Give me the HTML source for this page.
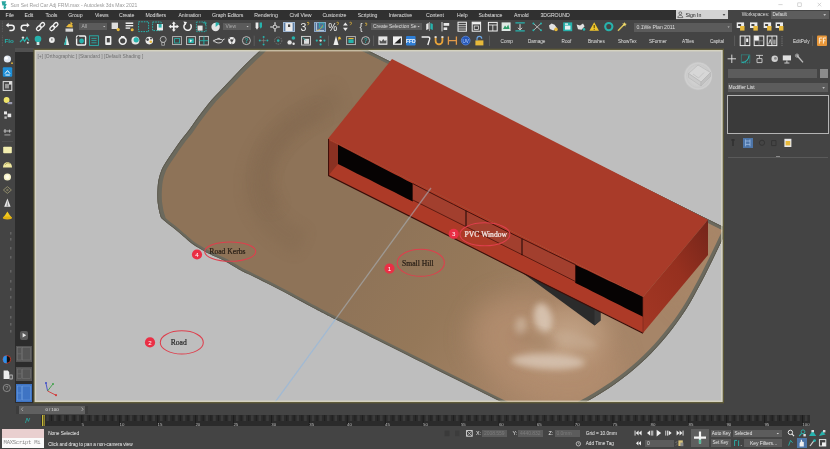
<!DOCTYPE html>
<html lang="en"><head><meta charset="utf-8"><title>Autodesk 3ds Max 2021</title>
<style>
html,body{margin:0;padding:0;}
body{width:830px;height:449px;overflow:hidden;background:#444444;position:relative;font-family:"Liberation Sans",sans-serif;}
#r{position:absolute;left:0;top:0;width:830px;height:449px;overflow:hidden;filter:blur(0.4px);}
#r>div{position:absolute;}
.t,.tm{position:absolute;white-space:nowrap;line-height:1.2;letter-spacing:-0.05px;}
.tm{font-family:"Liberation Mono",monospace;letter-spacing:-0.3px;}
svg.vp,svg.ov{position:absolute;left:0;top:0;}
.an{font-family:"Liberation Serif",serif;font-size:7.6px;stroke-width:0.22px;}
.nn{font-family:"Liberation Sans",sans-serif;font-size:6.2px;fill:#ffffff;}
.vl{font-family:"Liberation Sans",sans-serif;font-size:4.95px;fill:#707070;}
</style></head>
<body><div id="r">
<div style="left:0.0px;top:0.0px;width:830.0px;height:10.2px;background:#ffffff;"></div>
<div style="left:0.0px;top:10.2px;width:676.0px;height:9.8px;background:#303030;"></div>
<div style="left:676.0px;top:10.2px;width:154.0px;height:9.8px;background:#444444;"></div>
<div style="left:676.0px;top:10.2px;width:52.0px;height:9.3px;background:#d3d3d3;"></div>
<div style="left:771.0px;top:11.0px;width:57.6px;height:8.2px;background:#5d5d5d;"></div>
<div style="left:79.2px;top:22.6px;width:28.3px;height:7.6px;background:#5b5b5b;"></div>
<div style="left:223.3px;top:22.6px;width:27.6px;height:7.6px;background:#5b5b5b;"></div>
<div style="left:371.0px;top:22.6px;width:51.0px;height:7.6px;background:#5b5b5b;"></div>
<div style="left:633.9px;top:22.6px;width:98.5px;height:9.2px;background:#5b5b5b;"></div>
<div style="left:283.2px;top:21.6px;width:11.8px;height:10.8px;background:#5d7fa6;border:0.6px solid #9fb7d2;box-sizing:border-box;"></div>
<div style="left:314.0px;top:21.6px;width:12.0px;height:10.8px;background:#4f7096;border:0.6px solid #8aa6c6;box-sizing:border-box;"></div>
<div style="left:0.0px;top:48.0px;width:15.0px;height:355.0px;background:#444444;"></div>
<div style="left:15.0px;top:48.0px;width:18.5px;height:355.0px;background:#2c2c2c;"></div>
<div style="left:15.0px;top:48.0px;width:18.5px;height:3.5px;background:#505050;"></div>
<div style="left:723.0px;top:48.0px;width:107.0px;height:378.0px;background:#444444;"></div>
<div style="left:727.5px;top:69.0px;width:89.8px;height:9.2px;background:#5c5c5c;"></div>
<div style="left:819.6px;top:69.0px;width:8.4px;height:9.2px;background:#8c8c8c;"></div>
<div style="left:727.5px;top:83.4px;width:100.5px;height:8.8px;background:#5c5c5c;"></div>
<div style="left:727.0px;top:95.0px;width:101.5px;height:39.0px;background:#3a3a3a;border:0.9px solid #b4b4b4;box-sizing:border-box;"></div>
<div style="left:742.6px;top:137.5px;width:10.4px;height:10.6px;background:#4d75a8;"></div>
<div style="left:727.5px;top:156.6px;width:100.5px;height:0.8px;background:#5a5a5a;"></div>
<div style="left:775.5px;top:155.6px;width:4.0px;height:1.2px;background:#8a8a8a;"></div>
<div style="left:0.0px;top:403.0px;width:830.0px;height:46.0px;background:#444444;"></div>
<div style="left:16.0px;top:405.6px;width:72.0px;height:8.2px;background:#3c3c3c;"></div>
<div style="left:19.3px;top:405.8px;width:65.5px;height:7.8px;background:#606060;"></div>
<div style="left:41.4px;top:415.0px;width:768.6px;height:11.4px;background:#2b2b2b;"></div>
<div style="left:42.4px;top:415.3px;width:3.0px;height:10.8px;background:#c9b93a;"></div>
<div style="left:2.0px;top:428.5px;width:42.3px;height:9.2px;background:#e9cfcf;"></div>
<div style="left:2.0px;top:438.0px;width:42.3px;height:10.0px;background:#fbfbfb;"></div>
<div style="left:482.0px;top:429.6px;width:25.0px;height:7.6px;background:#5c5c5c;"></div>
<div style="left:518.0px;top:429.6px;width:25.0px;height:7.6px;background:#5c5c5c;"></div>
<div style="left:554.5px;top:429.6px;width:25.0px;height:7.6px;background:#5c5c5c;"></div>
<div style="left:645.0px;top:439.6px;width:29.0px;height:7.0px;background:#5c5c5c;"></div>
<div style="left:690.8px;top:428.6px;width:18.4px;height:18.4px;background:#5e5e5e;"></div>
<div style="left:710.6px;top:429.7px;width:20.8px;height:7.2px;background:#5c5c5c;"></div>
<div style="left:732.6px;top:429.7px;width:49.6px;height:7.2px;background:#5c5c5c;"></div>
<div style="left:710.6px;top:439.2px;width:20.8px;height:7.4px;background:#5c5c5c;"></div>
<div style="left:744.0px;top:439.2px;width:38.2px;height:7.4px;background:#5c5c5c;"></div>
<div style="left:797.0px;top:438.0px;width:10.0px;height:10.0px;background:#4d75a8;"></div>
<div style="left:16.2px;top:345.5px;width:15.6px;height:16.5px;background:#555555;"></div>
<div style="left:16.2px;top:367.0px;width:15.6px;height:13.5px;background:#555555;"></div>
<div style="left:16.2px;top:384.0px;width:15.6px;height:18.0px;background:#3e74c4;"></div>
<div style="left:19.5px;top:330.5px;width:8.5px;height:9.5px;background:#5a5a5a;border-radius:2px;"></div>
<span class="t" style="left:10.4px;top:2.1px;font-size:5.10px;color:#9a9a9a;">Sun Set Red Car Adj FRM.max - Autodesk 3ds Max 2021</span>
<span class="t" style="left:5.6px;top:11.9px;font-size:5.20px;color:#e2e2e2;">File</span>
<span class="t" style="left:24.5px;top:11.9px;font-size:5.20px;color:#e2e2e2;">Edit</span>
<span class="t" style="left:45.5px;top:11.9px;font-size:5.20px;color:#e2e2e2;">Tools</span>
<span class="t" style="left:68.3px;top:11.9px;font-size:5.20px;color:#e2e2e2;">Group</span>
<span class="t" style="left:95.0px;top:11.9px;font-size:5.20px;color:#e2e2e2;">Views</span>
<span class="t" style="left:119.0px;top:11.9px;font-size:5.20px;color:#e2e2e2;">Create</span>
<span class="t" style="left:145.5px;top:11.9px;font-size:5.20px;color:#e2e2e2;">Modifiers</span>
<span class="t" style="left:178.4px;top:11.9px;font-size:5.20px;color:#e2e2e2;">Animation</span>
<span class="t" style="left:212.0px;top:11.9px;font-size:5.20px;color:#e2e2e2;">Graph Editors</span>
<span class="t" style="left:254.3px;top:11.9px;font-size:5.20px;color:#e2e2e2;">Rendering</span>
<span class="t" style="left:289.6px;top:11.9px;font-size:5.20px;color:#e2e2e2;">Civil View</span>
<span class="t" style="left:322.4px;top:11.9px;font-size:5.20px;color:#e2e2e2;">Customize</span>
<span class="t" style="left:357.7px;top:11.9px;font-size:5.20px;color:#e2e2e2;">Scripting</span>
<span class="t" style="left:388.7px;top:11.9px;font-size:5.20px;color:#e2e2e2;">Interactive</span>
<span class="t" style="left:426.0px;top:11.9px;font-size:5.20px;color:#e2e2e2;">Content</span>
<span class="t" style="left:457.0px;top:11.9px;font-size:5.20px;color:#e2e2e2;">Help</span>
<span class="t" style="left:478.4px;top:11.9px;font-size:5.20px;color:#e2e2e2;">Substance</span>
<span class="t" style="left:514.0px;top:11.9px;font-size:5.20px;color:#e2e2e2;">Arnold</span>
<span class="t" style="left:540.4px;top:11.9px;font-size:5.20px;color:#e2e2e2;">3DGROUND</span>
<span class="t" style="left:685.5px;top:11.8px;font-size:5.20px;color:#222;">Sign In</span>
<span class="t" style="left:741.7px;top:12.1px;font-size:4.85px;color:#dcdcdc;">Workspaces:</span>
<span class="t" style="left:772.5px;top:12.2px;font-size:4.60px;color:#e6e6e6;">Default</span>
<span class="t" style="left:81.5px;top:23.4px;font-size:5.00px;color:#b4b4b4;">All</span>
<span class="t" style="left:225.5px;top:23.4px;font-size:5.00px;color:#a8a8a8;">View</span>
<span class="t" style="left:373.0px;top:23.4px;font-size:5.00px;color:#dddddd;">Create Selection Se</span>
<span class="t" style="left:636.5px;top:24.1px;font-size:5.20px;color:#dddddd;">0.1We Plan 2011</span>
<span class="t" style="left:500.6px;top:38.6px;font-size:4.65px;color:#e2e2e2;">Comp</span>
<span class="t" style="left:528.0px;top:38.6px;font-size:4.65px;color:#e2e2e2;">Damage</span>
<span class="t" style="left:561.6px;top:38.6px;font-size:4.65px;color:#e2e2e2;">Roof</span>
<span class="t" style="left:588.0px;top:38.6px;font-size:4.65px;color:#e2e2e2;">Brushes</span>
<span class="t" style="left:618.0px;top:38.6px;font-size:4.65px;color:#e2e2e2;">ShowTex</span>
<span class="t" style="left:649.0px;top:38.6px;font-size:4.65px;color:#e2e2e2;">SFormer</span>
<span class="t" style="left:682.0px;top:38.6px;font-size:4.65px;color:#e2e2e2;">ATiles</span>
<span class="t" style="left:710.0px;top:38.6px;font-size:4.65px;color:#e2e2e2;">Capital</span>
<span class="t" style="left:793.0px;top:38.6px;font-size:4.65px;color:#e2e2e2;">EditPoly</span>
<span class="t" style="left:728.6px;top:84.8px;font-size:4.95px;color:#eaeaea;">Modifier List</span>
<span class="t" style="left:52.0px;top:407.0px;font-size:4.40px;color:#e0e0e0;transform:translateX(-50%);">0 / 100</span>
<span class="t" style="left:48.2px;top:430.8px;font-size:4.80px;color:#f0f0f0;">None Selected</span>
<span class="t" style="left:48.2px;top:441.8px;font-size:4.75px;color:#f0f0f0;">Click and drag to pan a non-camera view</span>
<span class="tm" style="left:3.6px;top:439.8px;font-size:5.60px;color:#8a8a8a;">MAXScript Mi</span>
<span class="t" style="left:476.0px;top:430.2px;font-size:5.40px;color:#e6e6e6;">X:</span>
<span class="t" style="left:512.5px;top:430.2px;font-size:5.40px;color:#e6e6e6;">Y:</span>
<span class="t" style="left:548.6px;top:430.2px;font-size:5.40px;color:#e6e6e6;">Z:</span>
<span class="t" style="left:484.0px;top:430.4px;font-size:5.00px;color:#7c7c7c;">2008.559</span>
<span class="t" style="left:520.0px;top:430.4px;font-size:5.00px;color:#7c7c7c;">4440.832</span>
<span class="t" style="left:556.5px;top:430.4px;font-size:5.00px;color:#7c7c7c;">0.0mm</span>
<span class="t" style="left:585.8px;top:430.5px;font-size:4.80px;color:#eeeeee;">Grid = 10.0mm</span>
<span class="t" style="left:585.8px;top:441.2px;font-size:4.70px;color:#eeeeee;">Add Time Tag</span>
<span class="t" style="left:647.0px;top:440.2px;font-size:5.00px;color:#dddddd;">0</span>
<span class="t" style="left:711.8px;top:430.6px;font-size:4.70px;color:#e6e6e6;">Auto Key</span>
<span class="t" style="left:734.5px;top:430.6px;font-size:4.65px;color:#e6e6e6;">Selected</span>
<span class="t" style="left:712.6px;top:440.2px;font-size:4.60px;color:#e6e6e6;">Set Key</span>
<span class="t" style="left:750.0px;top:440.0px;font-size:5.00px;color:#e6e6e6;">Key Filters...</span>
<svg class="vp" width="830" height="449" viewBox="0 0 830 449">
<defs>
<clipPath id="vpc"><rect x="34.2" y="49.6" width="688.6" height="352.6"/></clipPath>
<clipPath id="tc"><path d="M274.5 36.0 C272.3 38.2 265.2 45.5 261.1 49.5 C257.0 53.5 253.5 56.6 250.0 60.0 C246.5 63.4 243.2 66.7 240.0 70.0 C236.8 73.3 233.7 76.7 230.5 80.0 C227.3 83.3 224.2 86.7 221.0 90.0 C217.8 93.3 214.4 96.7 211.5 100.0 C208.6 103.3 206.1 106.7 203.5 110.0 C200.9 113.3 198.4 116.7 196.0 120.0 C193.6 123.3 191.5 126.7 189.0 130.0 C186.5 133.3 183.5 136.7 181.0 140.0 C178.5 143.3 176.3 146.7 174.0 150.0 C171.7 153.3 169.3 156.7 167.2 160.0 C165.1 163.3 162.9 166.7 161.5 170.0 C160.1 173.3 159.2 176.7 158.5 180.0 C157.8 183.3 157.7 186.7 157.5 190.0 C157.3 193.3 157.4 197.3 157.5 200.0 C157.6 202.7 157.9 204.0 158.2 206.0 C158.5 208.0 158.8 210.0 159.3 212.0 C159.8 214.0 160.7 216.8 161.0 217.8 C162.0 218.7 164.7 221.1 167.0 223.0 C169.3 224.9 172.2 226.9 175.0 229.2 C177.8 231.4 180.7 234.1 183.5 236.5 C186.3 238.9 189.3 241.6 191.7 243.4 C194.1 245.2 195.8 246.2 198.0 247.6 C200.2 249.0 202.2 250.3 205.0 251.8 C207.8 253.3 211.7 255.0 215.0 256.6 C218.3 258.2 220.8 259.0 225.0 261.2 C229.2 263.4 236.3 267.9 240.0 270.0 C243.7 272.1 242.6 271.4 247.0 273.6 C251.4 275.8 259.3 279.4 266.4 283.0 C273.5 286.6 281.6 290.8 289.5 295.0 C297.4 299.2 305.1 303.6 313.5 308.0 C321.9 312.4 322.2 312.7 340.0 321.6 C357.8 330.5 393.2 348.2 420.0 361.6 C446.8 375.0 482.7 392.7 501.0 401.8 C519.3 410.9 525.2 413.6 530.0 416.0 L560.0 416.0 C562.3 414.8 569.1 411.0 573.8 408.5 C578.5 406.0 583.4 403.5 588.1 400.8 C592.8 398.1 597.5 395.4 602.0 392.5 C606.5 389.6 611.0 386.7 615.3 383.7 C619.6 380.7 623.8 377.6 627.9 374.3 C632.0 371.0 636.0 367.6 639.9 364.1 C643.8 360.6 647.6 357.0 651.2 353.3 C654.8 349.6 658.3 345.8 661.7 341.8 C665.1 337.8 668.5 333.7 671.8 329.5 C675.0 325.3 678.2 321.0 681.2 316.6 C684.2 312.2 687.1 307.8 689.8 303.2 C692.5 298.6 695.0 293.9 697.6 289.1 C700.2 284.4 702.7 279.6 705.2 274.7 C707.7 269.8 710.1 264.9 712.5 260.0 C714.9 255.1 717.3 250.1 719.7 245.1 C722.1 240.1 725.7 232.6 726.9 230.1 L727 228.8 L362 47.5 L339 36 Z"/></clipPath>
<filter id="b6" x="-50%" y="-50%" width="200%" height="200%"><feGaussianBlur stdDeviation="6"/></filter>
<filter id="b3" x="-50%" y="-50%" width="200%" height="200%"><feGaussianBlur stdDeviation="3.2"/></filter>
<filter id="b12" x="-50%" y="-50%" width="200%" height="200%"><feGaussianBlur stdDeviation="13"/></filter>
<radialGradient id="hill" cx="0.5" cy="0.5" r="0.5"><stop offset="0" stop-color="#c8ab90" stop-opacity="0.9"/><stop offset="0.6" stop-color="#bd9c7e" stop-opacity="0.55"/><stop offset="1" stop-color="#b08c6e" stop-opacity="0"/></radialGradient>
<linearGradient id="tg" gradientUnits="userSpaceOnUse" x1="385" y1="225" x2="575" y2="360"><stop offset="0" stop-color="#8e7358"/><stop offset="0.4" stop-color="#957859"/><stop offset="0.8" stop-color="#a38265"/><stop offset="1" stop-color="#a68568"/></linearGradient>
<linearGradient id="endg" x1="0" y1="1" x2="1" y2="0"><stop offset="0" stop-color="#a33724"/><stop offset="0.55" stop-color="#96301f"/><stop offset="1" stop-color="#74251a"/></linearGradient>
<radialGradient id="vcg" cx="0.5" cy="0.5" r="0.5"><stop offset="0" stop-color="#d9d9d9"/><stop offset="0.62" stop-color="#cfcfcf"/><stop offset="0.8" stop-color="#c9c9c9"/><stop offset="0.9" stop-color="#c6c6c6"/><stop offset="1" stop-color="#bfbfbf" stop-opacity="0"/></radialGradient>
</defs>
<g clip-path="url(#vpc)">
<rect x="33" y="48" width="691" height="356" fill="#bebebe"/>
<g clip-path="url(#tc)">
<path d="M274.5 36.0 C272.3 38.2 265.2 45.5 261.1 49.5 C257.0 53.5 253.5 56.6 250.0 60.0 C246.5 63.4 243.2 66.7 240.0 70.0 C236.8 73.3 233.7 76.7 230.5 80.0 C227.3 83.3 224.2 86.7 221.0 90.0 C217.8 93.3 214.4 96.7 211.5 100.0 C208.6 103.3 206.1 106.7 203.5 110.0 C200.9 113.3 198.4 116.7 196.0 120.0 C193.6 123.3 191.5 126.7 189.0 130.0 C186.5 133.3 183.5 136.7 181.0 140.0 C178.5 143.3 176.3 146.7 174.0 150.0 C171.7 153.3 169.3 156.7 167.2 160.0 C165.1 163.3 162.9 166.7 161.5 170.0 C160.1 173.3 159.2 176.7 158.5 180.0 C157.8 183.3 157.7 186.7 157.5 190.0 C157.3 193.3 157.4 197.3 157.5 200.0 C157.6 202.7 157.9 204.0 158.2 206.0 C158.5 208.0 158.8 210.0 159.3 212.0 C159.8 214.0 160.7 216.8 161.0 217.8 C162.0 218.7 164.7 221.1 167.0 223.0 C169.3 224.9 172.2 226.9 175.0 229.2 C177.8 231.4 180.7 234.1 183.5 236.5 C186.3 238.9 189.3 241.6 191.7 243.4 C194.1 245.2 195.8 246.2 198.0 247.6 C200.2 249.0 202.2 250.3 205.0 251.8 C207.8 253.3 211.7 255.0 215.0 256.6 C218.3 258.2 220.8 259.0 225.0 261.2 C229.2 263.4 236.3 267.9 240.0 270.0 C243.7 272.1 242.6 271.4 247.0 273.6 C251.4 275.8 259.3 279.4 266.4 283.0 C273.5 286.6 281.6 290.8 289.5 295.0 C297.4 299.2 305.1 303.6 313.5 308.0 C321.9 312.4 322.2 312.7 340.0 321.6 C357.8 330.5 393.2 348.2 420.0 361.6 C446.8 375.0 482.7 392.7 501.0 401.8 C519.3 410.9 525.2 413.6 530.0 416.0 L560.0 416.0 C562.3 414.8 569.1 411.0 573.8 408.5 C578.5 406.0 583.4 403.5 588.1 400.8 C592.8 398.1 597.5 395.4 602.0 392.5 C606.5 389.6 611.0 386.7 615.3 383.7 C619.6 380.7 623.8 377.6 627.9 374.3 C632.0 371.0 636.0 367.6 639.9 364.1 C643.8 360.6 647.6 357.0 651.2 353.3 C654.8 349.6 658.3 345.8 661.7 341.8 C665.1 337.8 668.5 333.7 671.8 329.5 C675.0 325.3 678.2 321.0 681.2 316.6 C684.2 312.2 687.1 307.8 689.8 303.2 C692.5 298.6 695.0 293.9 697.6 289.1 C700.2 284.4 702.7 279.6 705.2 274.7 C707.7 269.8 710.1 264.9 712.5 260.0 C714.9 255.1 717.3 250.1 719.7 245.1 C722.1 240.1 725.7 232.6 726.9 230.1 L727 228.8 L362 47.5 L339 36 Z" fill="url(#tg)"/>
<ellipse cx="700" cy="262" rx="30" ry="50" fill="#a88668" opacity="0.8" filter="url(#b12)"/>
<path d="M340 96 C 292 112 257 150 257 186 C 257 210 274 230 302 243" fill="none" stroke="#80664d" stroke-width="26" opacity="0.3" filter="url(#b6)"/>
<path d="M322 112 C 290 124 267 146 265 172 C 264 188 268 198 276 208" fill="none" stroke="#82684f" stroke-width="15" opacity="0.45" filter="url(#b6)"/>
<ellipse cx="545" cy="352" rx="78" ry="50" fill="#b48e70" opacity="0.85" filter="url(#b12)" transform="rotate(25 545 352)"/>
<ellipse cx="566" cy="340" rx="60" ry="46" fill="url(#hill)" transform="rotate(-20 566 340)"/>
<ellipse cx="543" cy="318" rx="9" ry="15" fill="#d9c6b4" opacity="0.9" filter="url(#b3)" transform="rotate(-12 543 318)"/>
<ellipse cx="521" cy="326" rx="6" ry="9" fill="#ccb49e" opacity="0.8" filter="url(#b3)"/>
<ellipse cx="536" cy="341" rx="20" ry="8" fill="#9c7a5c" opacity="0.55" filter="url(#b6)" transform="rotate(15 536 341)"/>
<ellipse cx="548" cy="361.5" rx="37" ry="7.5" fill="#d6c2b0" opacity="0.88" filter="url(#b3)" transform="rotate(2 548 361.5)"/>
<ellipse cx="575" cy="340" rx="22" ry="6" fill="#c4a88e" opacity="0.7" filter="url(#b3)" transform="rotate(14 575 340)"/>
<path d="M274.5 36.0 C272.3 38.2 265.2 45.5 261.1 49.5 C257.0 53.5 253.5 56.6 250.0 60.0 C246.5 63.4 243.2 66.7 240.0 70.0 C236.8 73.3 233.7 76.7 230.5 80.0 C227.3 83.3 224.2 86.7 221.0 90.0 C217.8 93.3 214.4 96.7 211.5 100.0 C208.6 103.3 206.1 106.7 203.5 110.0 C200.9 113.3 198.4 116.7 196.0 120.0 C193.6 123.3 191.5 126.7 189.0 130.0 C186.5 133.3 183.5 136.7 181.0 140.0 C178.5 143.3 176.3 146.7 174.0 150.0 C171.7 153.3 169.3 156.7 167.2 160.0 C165.1 163.3 162.9 166.7 161.5 170.0 C160.1 173.3 159.2 176.7 158.5 180.0 C157.8 183.3 157.7 186.7 157.5 190.0 C157.3 193.3 157.4 197.3 157.5 200.0 C157.6 202.7 157.9 204.0 158.2 206.0 C158.5 208.0 158.8 210.0 159.3 212.0 C159.8 214.0 160.7 216.8 161.0 217.8 C162.0 218.7 164.7 221.1 167.0 223.0 C169.3 224.9 172.2 226.9 175.0 229.2 C177.8 231.4 180.7 234.1 183.5 236.5 C186.3 238.9 189.3 241.6 191.7 243.4 C194.1 245.2 195.8 246.2 198.0 247.6 C200.2 249.0 202.2 250.3 205.0 251.8 C207.8 253.3 211.7 255.0 215.0 256.6 C218.3 258.2 220.8 259.0 225.0 261.2 C229.2 263.4 236.3 267.9 240.0 270.0 C243.7 272.1 242.6 271.4 247.0 273.6 C251.4 275.8 259.3 279.4 266.4 283.0 C273.5 286.6 281.6 290.8 289.5 295.0 C297.4 299.2 305.1 303.6 313.5 308.0 C321.9 312.4 322.2 312.7 340.0 321.6 C357.8 330.5 393.2 348.2 420.0 361.6 C446.8 375.0 482.7 392.7 501.0 401.8 C519.3 410.9 525.2 413.6 530.0 416.0 L560.0 416.0 C562.3 414.8 569.1 411.0 573.8 408.5 C578.5 406.0 583.4 403.5 588.1 400.8 C592.8 398.1 597.5 395.4 602.0 392.5 C606.5 389.6 611.0 386.7 615.3 383.7 C619.6 380.7 623.8 377.6 627.9 374.3 C632.0 371.0 636.0 367.6 639.9 364.1 C643.8 360.6 647.6 357.0 651.2 353.3 C654.8 349.6 658.3 345.8 661.7 341.8 C665.1 337.8 668.5 333.7 671.8 329.5 C675.0 325.3 678.2 321.0 681.2 316.6 C684.2 312.2 687.1 307.8 689.8 303.2 C692.5 298.6 695.0 293.9 697.6 289.1 C700.2 284.4 702.7 279.6 705.2 274.7 C707.7 269.8 710.1 264.9 712.5 260.0 C714.9 255.1 717.3 250.1 719.7 245.1 C722.1 240.1 725.7 232.6 726.9 230.1 L727 228.8 L362 47.5 L339 36 Z" fill="none" stroke="#6b695d" stroke-width="5.6" stroke-linejoin="round"/>
<path d="M274.5 36.0 C272.3 38.2 265.2 45.5 261.1 49.5 C257.0 53.5 253.5 56.6 250.0 60.0 C246.5 63.4 243.2 66.7 240.0 70.0 C236.8 73.3 233.7 76.7 230.5 80.0 C227.3 83.3 224.2 86.7 221.0 90.0 C217.8 93.3 214.4 96.7 211.5 100.0 C208.6 103.3 206.1 106.7 203.5 110.0 C200.9 113.3 198.4 116.7 196.0 120.0 C193.6 123.3 191.5 126.7 189.0 130.0 C186.5 133.3 183.5 136.7 181.0 140.0 C178.5 143.3 176.3 146.7 174.0 150.0 C171.7 153.3 169.3 156.7 167.2 160.0 C165.1 163.3 162.9 166.7 161.5 170.0 C160.1 173.3 159.2 176.7 158.5 180.0 C157.8 183.3 157.7 186.7 157.5 190.0 C157.3 193.3 157.4 197.3 157.5 200.0 C157.6 202.7 157.9 204.0 158.2 206.0 C158.5 208.0 158.8 210.0 159.3 212.0 C159.8 214.0 160.7 216.8 161.0 217.8" fill="none" stroke="#6b695d" stroke-width="8.8" stroke-linejoin="round" stroke-linecap="round"/>
<path d="M560.0 416.0 C562.3 414.8 569.1 411.0 573.8 408.5 C578.5 406.0 583.4 403.5 588.1 400.8 C592.8 398.1 597.5 395.4 602.0 392.5 C606.5 389.6 611.0 386.7 615.3 383.7 C619.6 380.7 623.8 377.6 627.9 374.3 C632.0 371.0 636.0 367.6 639.9 364.1 C643.8 360.6 647.6 357.0 651.2 353.3 C654.8 349.6 658.3 345.8 661.7 341.8 C665.1 337.8 668.5 333.7 671.8 329.5 C675.0 325.3 678.2 321.0 681.2 316.6 C684.2 312.2 687.1 307.8 689.8 303.2 C692.5 298.6 695.0 293.9 697.6 289.1 C700.2 284.4 702.7 279.6 705.2 274.7 C707.7 269.8 710.1 264.9 712.5 260.0 C714.9 255.1 717.3 250.1 719.7 245.1 C722.1 240.1 725.7 232.6 726.9 230.1" fill="none" stroke="#6b695d" stroke-width="7.8" stroke-linejoin="round" stroke-linecap="round"/>
<path d="M727 228.8 L362 47.5" fill="none" stroke="#6b695d" stroke-width="6.4"/>
<path d="M274.5 36.0 C272.3 38.2 265.2 45.5 261.1 49.5 C257.0 53.5 253.5 56.6 250.0 60.0 C246.5 63.4 243.2 66.7 240.0 70.0 C236.8 73.3 233.7 76.7 230.5 80.0 C227.3 83.3 224.2 86.7 221.0 90.0 C217.8 93.3 214.4 96.7 211.5 100.0 C208.6 103.3 206.1 106.7 203.5 110.0 C200.9 113.3 198.4 116.7 196.0 120.0 C193.6 123.3 191.5 126.7 189.0 130.0 C186.5 133.3 183.5 136.7 181.0 140.0 C178.5 143.3 176.3 146.7 174.0 150.0 C171.7 153.3 169.3 156.7 167.2 160.0 C165.1 163.3 162.9 166.7 161.5 170.0 C160.1 173.3 159.2 176.7 158.5 180.0 C157.8 183.3 157.7 186.7 157.5 190.0 C157.3 193.3 157.4 197.3 157.5 200.0 C157.6 202.7 157.9 204.0 158.2 206.0 C158.5 208.0 158.8 210.0 159.3 212.0 C159.8 214.0 160.7 216.8 161.0 217.8 C162.0 218.7 164.7 221.1 167.0 223.0 C169.3 224.9 172.2 226.9 175.0 229.2 C177.8 231.4 180.7 234.1 183.5 236.5 C186.3 238.9 189.3 241.6 191.7 243.4 C194.1 245.2 195.8 246.2 198.0 247.6 C200.2 249.0 202.2 250.3 205.0 251.8 C207.8 253.3 211.7 255.0 215.0 256.6 C218.3 258.2 220.8 259.0 225.0 261.2 C229.2 263.4 236.3 267.9 240.0 270.0 C243.7 272.1 242.6 271.4 247.0 273.6 C251.4 275.8 259.3 279.4 266.4 283.0 C273.5 286.6 281.6 290.8 289.5 295.0 C297.4 299.2 305.1 303.6 313.5 308.0 C321.9 312.4 322.2 312.7 340.0 321.6 C357.8 330.5 393.2 348.2 420.0 361.6 C446.8 375.0 482.7 392.7 501.0 401.8 C519.3 410.9 525.2 413.6 530.0 416.0 L560.0 416.0 C562.3 414.8 569.1 411.0 573.8 408.5 C578.5 406.0 583.4 403.5 588.1 400.8 C592.8 398.1 597.5 395.4 602.0 392.5 C606.5 389.6 611.0 386.7 615.3 383.7 C619.6 380.7 623.8 377.6 627.9 374.3 C632.0 371.0 636.0 367.6 639.9 364.1 C643.8 360.6 647.6 357.0 651.2 353.3 C654.8 349.6 658.3 345.8 661.7 341.8 C665.1 337.8 668.5 333.7 671.8 329.5 C675.0 325.3 678.2 321.0 681.2 316.6 C684.2 312.2 687.1 307.8 689.8 303.2 C692.5 298.6 695.0 293.9 697.6 289.1 C700.2 284.4 702.7 279.6 705.2 274.7 C707.7 269.8 710.1 264.9 712.5 260.0 C714.9 255.1 717.3 250.1 719.7 245.1 C722.1 240.1 725.7 232.6 726.9 230.1 L727 228.8 L362 47.5 L339 36 Z" fill="none" stroke="#55524a" stroke-width="1.4" stroke-linejoin="round" opacity="0.8"/>
</g>
<polygon points="517.6,269.3 600.5,310.7 600.5,320.5 594.5,325.4" fill="#2b2b2b"/>
<polygon points="594.5,308.7 600.5,311.7 600.5,320.5 594.5,325.4" fill="#383838"/>
<polygon points="392.0,59.0 328.0,138.7 643.0,297.0 708.0,219.8" fill="#a93b29"/>
<polygon points="643.0,297.0 708.0,219.8 708.0,255.0 643.0,333.0" fill="url(#endg)"/>
<polygon points="328.0,138.7 643.0,297.0 643.0,333.0 328.0,175.4" fill="#ad3a27"/>
<polygon points="329.3,140.5 338.0,144.7 338.0,164.0 329.3,174.5" fill="#8b3122"/>
<polygon points="338.0,144.7 344.2,148.0 350.5,151.2 356.7,154.5 362.9,157.7 369.2,161.0 375.4,164.2 381.6,167.4 387.9,170.7 394.1,173.9 400.3,177.1 406.6,180.4 412.8,183.6 412.8,201.5 406.6,198.4 400.3,195.2 394.1,192.1 387.9,189.0 381.6,185.9 375.4,182.7 369.2,179.6 362.9,176.5 356.7,173.4 350.5,170.2 344.2,167.1 338.0,164.0" fill="#060303"/>
<polygon points="575.5,264.7 581.1,267.4 586.8,270.1 592.4,272.8 598.0,275.5 603.6,278.2 609.2,280.9 614.9,283.6 620.5,286.3 626.1,288.9 631.8,291.6 637.4,294.3 643.0,297.0 643.0,316.8 637.4,314.0 631.8,311.2 626.1,308.4 620.5,305.5 614.9,302.7 609.2,299.9 603.6,297.1 598.0,294.3 592.4,291.4 586.8,288.6 581.1,285.8 575.5,283.0" fill="#060303"/>
<polygon points="412.8,183.6 426.4,190.6 439.9,197.5 453.5,204.4 467.0,211.3 480.6,218.1 494.1,224.9 507.7,231.6 521.3,238.3 534.8,244.9 548.4,251.6 561.9,258.1 575.5,264.7 575.5,281.5 561.9,274.7 548.4,267.9 534.8,261.1 521.3,254.3 507.7,247.5 494.1,240.7 480.6,233.9 467.0,227.1 453.5,220.4 439.9,213.6 426.4,206.8 412.8,200.0" fill="#a23f2e"/>
<polyline points="412.8,183.6 426.4,190.6 439.9,197.5 453.5,204.4 467.0,211.3 480.6,218.1 494.1,224.9 507.7,231.6 521.3,238.3 534.8,244.9 548.4,251.6 561.9,258.1 575.5,264.7" fill="none" stroke="#3b0f0a" stroke-width="0.9"/>
<polyline points="412.8,200.0 575.5,281.5" fill="none" stroke="#4a140d" stroke-width="0.8"/>
<line x1="466.0" y1="210.7" x2="466.0" y2="227.1" stroke="#1c0705" stroke-width="1"/>
<line x1="522.0" y1="238.7" x2="522.0" y2="255.2" stroke="#1c0705" stroke-width="1"/>
<line x1="575.5" y1="264.7" x2="575.5" y2="283.0" stroke="#2a0a07" stroke-width="0.8"/>
<polyline points="328.6,139.0 328.6,175.6 643.0,333.2" fill="none" stroke="#3a0e09" stroke-width="1.1"/>
<line x1="643" y1="297" x2="643" y2="333" stroke="#7d2a1c" stroke-width="0.7"/>
<line x1="431" y1="188" x2="335.4" y2="319.3" stroke="#a9b4be" stroke-width="1.3" opacity="0.58"/>
<line x1="335.4" y1="319.3" x2="274.5" y2="403" stroke="#9db9d6" stroke-width="1.3" opacity="0.85"/>
<ellipse cx="420.8" cy="262.8" rx="23.6" ry="13.5" fill="none" stroke="#de3f4d" stroke-width="1.05"/>
<text x="417.8" y="265.5" class="an" fill="#2b2118" stroke="#2b2118" text-anchor="middle">Small Hill</text>
<circle cx="389.5" cy="268.6" r="5.1" fill="#ea2f45"/>
<text x="389.5" y="270.8" class="nn" text-anchor="middle">1</text>
<ellipse cx="181.8" cy="342.4" rx="21.5" ry="11.6" fill="none" stroke="#de3f4d" stroke-width="1.05"/>
<text x="178.7" y="345.1" class="an" fill="#2a2a2a" stroke="#2a2a2a" text-anchor="middle">Road</text>
<circle cx="150.0" cy="342.4" r="5.1" fill="#ea2f45"/>
<text x="150.0" y="344.6" class="nn" text-anchor="middle">2</text>
<ellipse cx="484.9" cy="234.3" rx="25.0" ry="11.5" fill="none" stroke="#de3f4d" stroke-width="1.05"/>
<text x="485.8" y="237.0" class="an" fill="#f4ecea" stroke="#f4ecea" text-anchor="middle">PVC Window</text>
<circle cx="453.7" cy="233.9" r="5.1" fill="#ea2f45"/>
<text x="453.7" y="236.1" class="nn" text-anchor="middle">3</text>
<ellipse cx="230.2" cy="251.6" rx="25.5" ry="9.7" fill="none" stroke="#de3f4d" stroke-width="1.05"/>
<text x="227.4" y="254.3" class="an" fill="#2b2118" stroke="#2b2118" text-anchor="middle">Road Kerbs</text>
<circle cx="197.0" cy="254.5" r="5.1" fill="#ea2f45"/>
<text x="197.0" y="256.7" class="nn" text-anchor="middle">4</text>
<circle cx="698" cy="76" r="15" fill="url(#vcg)"/>
<circle cx="698.3" cy="76" r="12.8" fill="none" stroke="#cfcfcf" stroke-width="1.6" opacity="0.9"/>
<polygon points="688.5,73.5 698,65 710.5,72.5 701,82" fill="#d7d7d7" stroke="#b9b9b9" stroke-width="0.7"/>
<polygon points="688.5,73.5 701,82 701,86 688.5,77.5" fill="#cbcbcb" stroke="#b6b6b6" stroke-width="0.6"/>
<polygon points="701,82 710.5,72.5 710.5,76.5 701,86" fill="#c1c1c1" stroke="#b6b6b6" stroke-width="0.6"/>
<polyline points="693,74 698.5,78 704,72.5" fill="none" stroke="#bdbdbd" stroke-width="0.7"/>
<line x1="47.6" y1="391" x2="46" y2="383.5" stroke="#3a49c8" stroke-width="0.9"/>
<line x1="47.6" y1="391" x2="52.7" y2="384.3" stroke="#3da047" stroke-width="0.9"/>
<line x1="47.6" y1="391" x2="55.6" y2="395" stroke="#d13a3a" stroke-width="0.9"/>
<circle cx="46" cy="383" r="1" fill="#3a49c8"/><circle cx="53" cy="384" r="1" fill="#3da047"/><circle cx="56" cy="395.2" r="1.1" fill="#d13a3a"/>
<text x="37.5" y="57.6" class="vl">[+] [Orthographic ] [Standard ] [Default Shading ]</text>
</g>
<rect x="34" y="49.3" width="689.4" height="353.4" fill="none" stroke="#5e5a36" stroke-width="1.3"/>
<rect x="35.4" y="50.7" width="686.4" height="350.6" fill="none" stroke="#e0dcc2" stroke-width="1.5" opacity="0.68"/>
</svg>
<svg class="ov" width="830" height="449" viewBox="0 0 830 449">
<path d="M1.6 1.2h4.6l-1 2.6 1.6.2-1.4 3 1 .2-1.6 2.2-1.4-1.4.6-2.6H2.4z" fill="#2aa6a0"/>
<g stroke="#b4b4b4" stroke-width="0.55" fill="none"><line x1="778.4" y1="4.6" x2="782.6" y2="4.6"/><rect x="797.8" y="2.9" width="3.4" height="3.4"/><path d="M817.6 2.8l3.6 3.6M821.2 2.8l-3.6 3.6"/></g>
<circle cx="680.3" cy="13.2" r="1.4" fill="none" stroke="#333" stroke-width="0.6"/><path d="M677.8 17.6c0-3 5-3 5 0z" fill="none" stroke="#333" stroke-width="0.6"/>
<path d="M722.6 14.3h2.8l-1.4 1.5z" fill="#222"/>
<path d="M823.3 14.3h2.8l-1.4 1.5z" fill="#ddd"/>
<path d="M103.1 26.1h2.2l-1.1 1.2z" fill="#ccc"/>
<path d="M246.5 26.1h2.2l-1.1 1.2z" fill="#ccc"/>
<path d="M417.5 26.1h2.2l-1.1 1.2z" fill="#ccc"/>
<path d="M727.5 26.6h2.2l-1.1 1.2z" fill="#ccc"/>
<path d="M822.3 87.3h2.6l-1.3 1.4z" fill="#ddd"/>
<path d="M776.6 433.0h2.4l-1.2 1.3z" fill="#ddd"/>
<line x1="2.4" y1="21.5" x2="2.4" y2="32.5" stroke="#6a6a6a" stroke-width="0.8" stroke-dasharray="0.8 0.8"/>
<line x1="2.4" y1="35.5" x2="2.4" y2="46.5" stroke="#6a6a6a" stroke-width="0.8" stroke-dasharray="0.8 0.8"/>
<path d="M7.4 25.2h4.2a2.6 2.6 0 010 5.2h-2.2" fill="none" stroke="#f2f2f2" stroke-width="1.5"/><path d="M5.8 25.2l2.8-2.4v4.8z" fill="#f2f2f2"/>
<path d="M28 25.2h-4.2a2.6 2.6 0 000 5.2h2.2" fill="none" stroke="#f2f2f2" stroke-width="1.5"/><path d="M29.6 25.2l-2.8-2.4v4.8z" fill="#f2f2f2"/>
<g transform="rotate(-45 40.5 26.6)" fill="none" stroke="#f2f2f2" stroke-width="1.3"><rect x="35.5" y="24.9" width="5.4" height="3.4" rx="1.7"/><rect x="40.1" y="24.9" width="5.4" height="3.4" rx="1.7"/></g>
<g transform="rotate(-45 53.9 26.6)" fill="none" stroke="#f2f2f2" stroke-width="1.3"><rect x="48.9" y="24.9" width="5.4" height="3.4" rx="1.7"/><rect x="53.5" y="24.9" width="5.4" height="3.4" rx="1.7"/></g>
<path d="M65.5 28.5h7.6v3.2h-7.6z" fill="#d8d8d8"/><path d="M66 27l3-3.2 3.6 1.4v2.4z" fill="#e8b93a"/><path d="M70.6 21.6l2.2 2.2-2.4 2.2z" fill="#e8b93a"/>
<rect x="111.6" y="22.6" width="6.4" height="6.4" fill="#ddd"/><circle cx="118.2" cy="29.6" r="1.6" fill="#e8b93a"/>
<rect x="125.6" y="22.4" width="7.6" height="1.6" fill="#e8e8e8"/><rect x="125.6" y="25" width="7.6" height="1.4" fill="#e8e8e8"/><rect x="125.6" y="27.4" width="4.6" height="1.4" fill="#e8e8e8"/><circle cx="132.2" cy="29.8" r="1.5" fill="#e8b93a"/>
<rect x="138.6" y="21.8" width="10" height="9.8" fill="none" stroke="#27b3ad" stroke-width="1" stroke-dasharray="1.6 1"/>
<rect x="152.6" y="22" width="8.6" height="8.6" fill="none" stroke="#27b3ad" stroke-width="1" stroke-dasharray="1.6 1"/><rect x="157" y="24" width="6" height="6.4" fill="#e8e8e8"/><rect x="158.6" y="24" width="3" height="3.6" fill="#27b3ad"/>
<path d="M173.8 21.4l2 2.4h-1.2v2h2v-1.2l2.4 2-2.4 2v-1.2h-2v2h1.2l-2 2.4-2-2.4h1.2v-2h-2v1.2l-2.4-2 2.4-2v1.2h2v-2h-1.2z" fill="#f2f2f2"/>
<path d="M190.4 24.2a3.7 3.7 0 11-4.6-.8" fill="none" stroke="#f2f2f2" stroke-width="1.5"/><path d="M183.4 21.6l3.6.4-1.6 3.2z" fill="#f2f2f2"/>
<rect x="196.4" y="22" width="9.6" height="9.6" fill="none" stroke="#27b3ad" stroke-width="0.9" stroke-dasharray="1.5 1"/><rect x="197.6" y="25.6" width="5" height="5" fill="#e8e8e8"/><path d="M203 22.8h2.4v2.4" fill="none" stroke="#27b3ad" stroke-width="0.9"/>
<circle cx="215.6" cy="27" r="4.2" fill="#e4e4e4"/><path d="M215.6 27l4-3.2a4.6 4.6 0 00-4-1.4z" fill="#27b3ad"/>
<path d="M255.6 22.4v5.2l1.4 2.2 1.4-2.2v-5.2z" fill="#e8e8e8"/><path d="M259.6 22.4v4.4l1.2 2 1.2-2v-4.4z" fill="#27b3ad"/>
<path d="M275 22.2v9.6M270.2 27h9.6" stroke="#f2f2f2" stroke-width="1.1"/><rect x="273.6" y="25.6" width="2.8" height="2.8" fill="#444" stroke="#f2f2f2" stroke-width="0.5"/>
<rect x="285.4" y="23" width="7.2" height="8" fill="#eaeaea"/><rect x="288" y="24.4" width="2.2" height="2.6" fill="#444"/>
<text x="300.6" y="30.8" font-size="10.5" fill="#f0f0f0" font-family="Liberation Sans,sans-serif">3</text><path d="M307 22.6c1.6-1 2.6.4 1.4 1.6l-.8 1" stroke="#e8b93a" fill="none" stroke-width="0.8"/>
<path d="M316.4 30.6h7.6M316.4 30.6v-7.6" stroke="#d8e4f0" stroke-width="0.8" fill="none"/><rect x="319.6" y="23" width="4.2" height="4.2" fill="none" stroke="#27b3ad" stroke-width="0.7"/><path d="M316.6 30.4a7 7 0 006-5" stroke="#e8b93a" stroke-width="0.7" fill="none"/>
<text x="328.2" y="30.6" font-size="10" fill="#f0f0f0" font-family="Liberation Sans,sans-serif">%</text><path d="M336.6 22.6c1.6-1 2.6.4 1.4 1.6l-.8 1" stroke="#e8b93a" fill="none" stroke-width="0.8"/>
<path d="M345.4 22.4l2.4 3.2h-4.8zM345.4 31l2.4-3.2h-4.8z" fill="#e8e8e8"/><path d="M349.6 22.6c1.6-1 2.6.4 1.4 1.6l-.8 1" stroke="#e8b93a" fill="none" stroke-width="0.8"/>
<text x="359.4" y="30.4" font-size="9.5" fill="#f0f0f0" font-family="Liberation Sans,sans-serif">{</text><path d="M365 23.4c1.6-1 2.6.4 1.4 1.6l-.8 1" stroke="#e8b93a" fill="none" stroke-width="0.8"/>
<path d="M429.4 22v9" stroke="#ddd" stroke-width="0.6"/><path d="M428.6 23l-2.4 1v6l2.4-1z" fill="#e8e8e8"/><path d="M430.4 23l2.4 1v6l-2.4-1z" fill="#27b3ad"/>
<path d="M442 22v9.4" stroke="#e8e8e8" stroke-width="0.9"/><rect x="443.6" y="23" width="5.6" height="2.8" fill="#e8e8e8"/><rect x="443.6" y="27.4" width="3.6" height="2.6" fill="#e8e8e8"/>
<rect x="458.0" y="22.2" width="8.4" height="9" fill="none" stroke="#f2f2f2" stroke-width="1"/>
<line x1="458.0" x2="466.4" y1="24.6" y2="24.6" stroke="#f2f2f2" stroke-width="0.7"/>
<line x1="458.0" x2="466.4" y1="26.8" y2="26.8" stroke="#f2f2f2" stroke-width="0.7"/>
<line x1="458.0" x2="466.4" y1="29.0" y2="29.0" stroke="#f2f2f2" stroke-width="0.7"/>
<rect x="472.2" y="22.2" width="8.4" height="9" fill="none" stroke="#f2f2f2" stroke-width="1"/><rect x="472.2" y="22.2" width="8.4" height="2.2" fill="#f2f2f2"/><rect x="474.2" y="26" width="4.4" height="3.4" fill="none" stroke="#f2f2f2" stroke-width="0.7"/>
<rect x="488.4" y="22.4" width="8.8" height="8.6" fill="none" stroke="#f2f2f2" stroke-width="1"/><path d="M488.4 25h8.8M492.8 25v6" stroke="#f2f2f2" stroke-width="0.8"/>
<rect x="501.6" y="22.4" width="9" height="8.6" fill="#dfe8e4"/><path d="M503 29l2-3.6 1.6 2 1.6-3 1.4 4.6z" fill="#2e9e6a"/>
<path d="M515.4 22.8h9.4M515.4 30.8h9.4" stroke="#27b3ad" stroke-width="1.3"/><path d="M520 24.2v5.4M518 27.8l2 2 2-2" stroke="#f2f2f2" stroke-width="0.9" fill="none"/>
<path d="M533.4 23.4l7.6 7M541 23.4l-7.6 7" stroke="#d0d0d0" stroke-width="0.8"/><circle cx="533.4" cy="23.6" r="1" fill="#27b3ad"/><circle cx="541" cy="23.6" r="1" fill="#27b3ad"/><circle cx="533.4" cy="30.2" r="1" fill="#27b3ad"/><circle cx="541" cy="30.2" r="1" fill="#27b3ad"/>
<path d="M549 25.4l2.6-2 3 1.4 2.2 3-3.4 2.8-3.6-1.6z" fill="#e2e2e2"/><circle cx="556" cy="29.4" r="1.8" fill="#e8b93a"/>
<rect x="563.2" y="22.4" width="9" height="8.8" fill="#27b3ad"/><rect x="565" y="25.6" width="5.4" height="4" fill="#e8f2f2"/><rect x="565" y="23.4" width="3" height="1.4" fill="#e8f2f2"/>
<path d="M576.6 24.4l3.4 1 3-1.8 1.6 2.6-3 3.6-3.6-.6z" fill="#e2e2e2"/><circle cx="584" cy="29.4" r="1.3" fill="#27b3ad"/>
<path d="M594.2 22.2l4.8 8.6h-9.6z" fill="#f0c62c"/><path d="M594.2 25v3.2M594.2 29.2v.8" stroke="#3a3000" stroke-width="0.9"/>
<circle cx="608.8" cy="26.6" r="3.6" fill="none" stroke="#27b3ad" stroke-width="2.1"/>
<path d="M618 30.8l5.6-5.8" stroke="#d9c25a" stroke-width="1.5"/><path d="M624.6 22l.6 1.6 1.6.4-1.4.9.2 1.7-1.3-1-1.6.6.6-1.6-1-1.3 1.7.1z" fill="#f2dc6c"/>
<rect x="736.7" y="22.4" width="7.4" height="5.6" fill="#ececec"/><rect x="740.1" y="26" width="4.4" height="4.6" fill="#e8b93a"/><rect x="738.1" y="24" width="3" height="2" fill="#444"/>
<rect x="750.0" y="22.4" width="7.4" height="5.6" fill="#ececec"/><rect x="753.4" y="26" width="4.4" height="4.6" fill="#e8b93a"/><rect x="751.4" y="24" width="3" height="2" fill="#444"/>
<rect x="763.7" y="22.4" width="7.4" height="5.6" fill="#ececec"/><rect x="767.1" y="26" width="4.4" height="4.6" fill="#e8b93a"/><rect x="765.1" y="24" width="3" height="2" fill="#444"/>
<rect x="775.6" y="22.4" width="7.4" height="5.6" fill="#ececec"/><rect x="779.0" y="26" width="4.4" height="4.6" fill="#e8b93a"/><rect x="777.0" y="24" width="3" height="2" fill="#444"/>
<text x="4.6" y="43" font-size="6.2" font-weight="bold" fill="#27b3ad" font-family="Liberation Sans,sans-serif">Flo</text>
<path d="M20 42l3-3 1.6 2.4 2.4-4 2 3.4" stroke="#27b3ad" stroke-width="1.2" fill="none"/><circle cx="23" cy="37.6" r="1.2" fill="#ddd"/><circle cx="27.8" cy="42.8" r="1" fill="#ddd"/>
<circle cx="38" cy="39" r="3.3" fill="#27b3ad"/><rect x="36.6" y="42" width="2.8" height="3" fill="#cfe8e6"/>
<circle cx="51.9" cy="40" r="2.9" fill="#ececec"/><rect x="51.4" y="38.6" width="1" height="2" fill="#555"/>
<path d="M66.6 35.6l2.6 9.4h-5z" fill="#ececec"/><path d="M66.6 35.6l-.4 9.4h-2.2z" fill="#27b3ad"/>
<rect x="76.6" y="36" width="9" height="9" rx="1" fill="none" stroke="#f0f0f0" stroke-width="1.4"/><circle cx="81.6" cy="41" r="2.4" fill="#27b3ad"/><path d="M79 36l-2.4 2.4" stroke="#444" stroke-width="1.2"/>
<rect x="89.6" y="35.8" width="8.8" height="9.6" fill="none" stroke="#27b3ad" stroke-width="0.9"/><path d="M91.4 38.4h5.2M91.4 40.6h5.2M91.4 42.8h5.2" stroke="#27b3ad" stroke-width="0.8"/>
<rect x="105.2" y="36" width="6.2" height="9" rx="1" fill="#f0f0f0"/><rect x="106.8" y="38" width="3" height="4.4" fill="#444"/>
<circle cx="122.7" cy="40.8" r="3.4" fill="none" stroke="#f0f0f0" stroke-width="1.6"/><rect x="121" y="36" width="3.4" height="1.6" fill="#f0f0f0"/>
<circle cx="135.4" cy="40.6" r="4" fill="#e4e4e4"/><circle cx="136.2" cy="39.8" r="2.6" fill="#27b3ad"/>
<circle cx="149.3" cy="40.6" r="3.8" fill="#ececec"/><circle cx="147.6" cy="39.6" r="1.3" fill="#444"/><circle cx="150.8" cy="41.8" r="1.3" fill="#e8b93a"/><circle cx="151" cy="38.6" r="1" fill="#444"/>
<circle cx="163.2" cy="39.4" r="3" fill="none" stroke="#bdbdbd" stroke-width="0.9"/><rect x="161.8" y="42.6" width="2.8" height="2.6" fill="none" stroke="#bdbdbd" stroke-width="0.7"/>
<rect x="172.6" y="36.6" width="8.8" height="8" fill="none" stroke="#bdbdbd" stroke-width="0.9"/><rect x="174.6" y="38.6" width="5" height="4.4" fill="none" stroke="#27b3ad" stroke-width="0.8"/>
<rect x="186.6" y="36.6" width="8.8" height="8" fill="none" stroke="#cfcfcf" stroke-width="0.9"/><rect x="188.4" y="38.4" width="5.4" height="4.6" fill="#27b3ad"/><path d="M190 39.4l2.4 1.4-2.4 1.4z" fill="#eee"/>
<rect x="199.4" y="36.4" width="9" height="8.6" fill="none" stroke="#cfcfcf" stroke-width="0.9"/><path d="M203.9 36.4v8.6M199.4 40.7h9" stroke="#27b3ad" stroke-width="0.9"/>
<path d="M214.6 40.4c0-1.6 8-1.6 8 0 0 3.4-8 3.4-8 0zM222.6 40l2-1M214.6 40.2c-1.6-.6-1.6 1.6 0 1.6" fill="none" stroke="#e8e8e8" stroke-width="0.9"/><path d="M217.4 38.4h2.4" stroke="#e8e8e8" stroke-width="0.9"/>
<circle cx="231.8" cy="40.6" r="3.6" fill="#ececec"/><circle cx="231.8" cy="40.6" r="1.4" fill="#444"/><path d="M229 38l1.4 1.4M234.6 38l-1.4 1.4M231.8 44.4v-2" stroke="#444" stroke-width="0.8"/>
<circle cx="246.4" cy="40.6" r="4" fill="none" stroke="#c9c9c9" stroke-width="0.9"/><text x="246.4" y="43" font-size="6.4" font-weight="bold" text-anchor="middle" fill="#2e9e98" font-family="Liberation Sans,sans-serif">?</text>
<line x1="254.2" y1="35.6" x2="254.2" y2="46" stroke="#666" stroke-width="0.7"/>
<line x1="328.5" y1="35.6" x2="328.5" y2="46" stroke="#666" stroke-width="0.7"/>
<line x1="373.6" y1="35.6" x2="373.6" y2="46" stroke="#666" stroke-width="0.7"/>
<line x1="489.5" y1="35.6" x2="489.5" y2="46" stroke="#666" stroke-width="0.7"/>
<line x1="734.6" y1="35.6" x2="734.6" y2="46" stroke="#666" stroke-width="0.7"/>
<line x1="812.6" y1="35.6" x2="812.6" y2="46" stroke="#666" stroke-width="0.7"/>
<g fill="#27b3ad"><circle cx="263.6" cy="37" r="1"/><circle cx="263.6" cy="44.4" r="1"/><circle cx="259.8" cy="40.6" r="1"/><circle cx="267.4" cy="40.6" r="1"/></g><path d="M263.6 38.4v4.4M261.2 40.6h4.8" stroke="#8a8a8a" stroke-width="0.6"/>
<circle cx="278.2" cy="40.6" r="3.6" fill="none" stroke="#8a8a8a" stroke-width="0.7" stroke-dasharray="1.4 1"/><circle cx="278.2" cy="40.6" r="1.3" fill="#27b3ad"/>
<circle cx="289.6" cy="42.4" r="2.2" fill="#e4e4e4"/><circle cx="293.4" cy="38" r="1.8" fill="#27b3ad"/><circle cx="293.6" cy="43.8" r="1.2" fill="#e4e4e4"/>
<rect x="301.6" y="36.4" width="8.8" height="8.6" fill="none" stroke="#dcdcdc" stroke-width="0.9"/><rect x="304" y="38.8" width="5" height="5" fill="#dcdcdc"/><path d="M302.6 37.4l3 3" stroke="#27b3ad" stroke-width="0.9"/>
<g fill="#27b3ad"><circle cx="320.6" cy="37" r="1.1"/><circle cx="320.6" cy="44.4" r="1.1"/><circle cx="316.8" cy="40.6" r="1.1"/><circle cx="324.4" cy="40.6" r="1.1"/></g><circle cx="320.6" cy="40.6" r="1.2" fill="#ddd"/>
<path d="M336 36l2.6 9h-5.2z" fill="#ececec"/><path d="M340 36.4l1.4 3-1.8-.4-.8 2-.8-3.4z" fill="#e8b93a"/>
<rect x="346.6" y="36.6" width="8.8" height="8" fill="none" stroke="#bdbdbd" stroke-width="0.9"/><rect x="348.4" y="39.4" width="5.2" height="3.6" fill="#27b3ad"/><rect x="348.4" y="38" width="5.2" height="1" fill="#e8b93a"/>
<circle cx="365.6" cy="40.6" r="4" fill="none" stroke="#c9c9c9" stroke-width="0.9"/><text x="365.6" y="43" font-size="6.4" font-weight="bold" text-anchor="middle" fill="#2e9e98" font-family="Liberation Sans,sans-serif">?</text>
<rect x="378.4" y="36.4" width="9" height="8.4" fill="#e6e6e6"/><path d="M379.6 43.6v-3.6l2 1.6 1.6-2.6 1.6 2 1.6-1v3.6z" fill="#555"/>
<rect x="393" y="36.4" width="9" height="8.4" fill="#f2f2f2"/><path d="M394.4 43.4l6.4-5.6v5.6z" fill="#222"/>
<rect x="406" y="36" width="9.6" height="9.4" rx="1" fill="#2f7fd6"/><text x="410.8" y="43" font-size="5" font-weight="bold" text-anchor="middle" fill="#fff" font-family="Liberation Sans,sans-serif">FFD</text>
<path d="M421.6 37h6.6c1.4 0 1.8 1 1.4 2.4l-1.8 5.6" fill="none" stroke="#f0f0f0" stroke-width="1.4"/>
<path d="M435.6 37v4a3.4 3.4 0 006.8 0v-4" fill="none" stroke="#e8a33a" stroke-width="1.8"/><rect x="434.6" y="36.2" width="2" height="1.6" fill="#eee"/><rect x="441.4" y="36.2" width="2" height="1.6" fill="#eee"/>
<path d="M448.4 36.4v8.4M456.4 36.4v8.4M448.4 40.6h8" stroke="#e39a4a" stroke-width="1.3" fill="none"/>
<circle cx="465.7" cy="40.6" r="4.4" fill="#2456b8" stroke="#6d9af0" stroke-width="0.6"/><text x="465.7" y="42.6" font-size="4.6" text-anchor="middle" fill="#bcd2ff" font-family="Liberation Sans,sans-serif">UV</text>
<rect x="475.4" y="40.4" width="8" height="5" fill="#e8b93a"/><path d="M477 40.4v-1.6a2.4 2.4 0 014.8 0" fill="none" stroke="#6aa6e8" stroke-width="1.1"/>
<rect x="740.2" y="36" width="9.6" height="9.6" fill="none" stroke="#f0f0f0" stroke-width="1"/>
<rect x="754.2" y="36" width="9.6" height="9.6" fill="none" stroke="#f0f0f0" stroke-width="1"/>
<rect x="767.2" y="36" width="9.6" height="9.6" fill="none" stroke="#f0f0f0" stroke-width="1"/>
<path d="M745 36v9.6" stroke="#f0f0f0" stroke-width="0.9"/><rect x="746.2" y="38.4" width="2" height="3.6" fill="#f0f0f0"/>
<rect x="754.2" y="36" width="4.8" height="4.8" fill="#f0f0f0"/><path d="M759 36v9.6M754.2 40.8h9.6" stroke="#9a9a9a" stroke-width="0.6"/>
<path d="M772 36v9.6" stroke="#f0f0f0" stroke-width="0.8"/><path d="M768.6 44.4l1.6-5 1.4 5" stroke="#f0f0f0" stroke-width="0.7" fill="none"/><rect x="773.2" y="39.6" width="2.4" height="4.8" fill="#9a9a9a"/>
<line x1="782" y1="36" x2="782" y2="46" stroke="#8a8a8a" stroke-width="0.8" stroke-dasharray="0.9 0.9"/>
<rect x="817" y="35.6" width="10" height="10.4" rx="1" fill="#e8973a"/><path d="M819.4 43.6v-5.6h2.8M819.4 40.8h2.2M823.4 43.6v-5.6h2.6M823.4 40.8h2" stroke="#fff3e0" stroke-width="0.9" fill="none"/>
<circle cx="7.4" cy="59" r="3.6" fill="#dfe6f0"/><circle cx="6.4" cy="58" r="1.6" fill="#fff"/><circle cx="12" cy="63.2" r="0.9" fill="#e8b93a"/>
<rect x="2.8" y="67.2" width="9.4" height="9.6" rx="1" fill="#1e8fd8"/><path d="M5 73.6l2.5-3 2.5 3M5.4 75h4.4" stroke="#fff" stroke-width="1" fill="none"/>
<rect x="3.2" y="81.6" width="8.6" height="8.8" fill="none" stroke="#e0e0e0" stroke-width="1"/><rect x="5" y="83.8" width="4" height="4.6" fill="#9a9a9a"/><rect x="9" y="81.6" width="2.8" height="3" fill="#e0e0e0"/>
<circle cx="6.6" cy="100" r="2.9" fill="#f0e56a"/><rect x="7.6" y="102" width="4.6" height="2.2" fill="#9a9ab0"/>
<rect x="4" y="111.4" width="3" height="3" fill="#e8e8e8"/><rect x="7.6" y="113.6" width="3.6" height="3.6" fill="#e8e8e8"/><rect x="4.4" y="116.4" width="2.4" height="2.4" fill="#bdbdbd"/>
<path d="M3.6 131h8M5 129v4M9.6 129.6v3" stroke="#bdbdbd" stroke-width="1"/><rect x="4.4" y="134.2" width="6" height="1.4" fill="#8a8a8a"/>
<line x1="2" y1="141.4" x2="13" y2="141.4" stroke="#5a5a5a" stroke-width="0.6"/>
<rect x="3.2" y="146.8" width="8.6" height="6.4" rx="0.8" fill="#f4efb0"/>
<path d="M3 167.4c0-7 9-7 9 0z" fill="#f0e8a0"/><path d="M5 165a3 3 0 015-1" stroke="#8a7f3a" stroke-width="0.6" fill="none"/>
<circle cx="7.4" cy="177" r="3.6" fill="#f6f2c8"/><circle cx="7.4" cy="177" r="2" fill="#fffde8"/>
<path d="M7.4 186.6l4 3.4-4 3.4-4-3.4z" fill="none" stroke="#8e8a6a" stroke-width="1"/><circle cx="7.4" cy="190" r="1.2" fill="#7a765a"/>
<path d="M7.4 198.4l3.2 8.4h-6.4z" fill="#ececec"/><path d="M7.4 200l1 6.4h-2z" fill="#9a9a9a"/>
<path d="M7.4 211.6l2.4 3.6 2.2 2.6h-9.2l2.2-2.6z" fill="#f0c81e"/><ellipse cx="7.4" cy="218" rx="4.6" ry="1.4" fill="#e0b010"/>
<rect x="10.4" y="232" width="0.9" height="2.6" fill="#777"/>
<rect x="10.4" y="238" width="0.9" height="2.6" fill="#777"/>
<rect x="10.4" y="247" width="0.9" height="2.6" fill="#777"/>
<rect x="10.4" y="256" width="0.9" height="2.6" fill="#777"/>
<rect x="10.4" y="270" width="0.9" height="2.6" fill="#777"/>
<rect x="10.4" y="280" width="0.9" height="2.6" fill="#777"/>
<rect x="10.4" y="288" width="0.9" height="2.6" fill="#777"/>
<rect x="10.4" y="296" width="0.9" height="2.6" fill="#777"/>
<rect x="10.4" y="306" width="0.9" height="2.6" fill="#777"/>
<rect x="10.4" y="316" width="0.9" height="2.6" fill="#777"/>
<rect x="10.4" y="323" width="0.9" height="2.6" fill="#777"/>
<rect x="10.4" y="330" width="0.9" height="2.6" fill="#777"/>
<circle cx="6.8" cy="359.4" r="3.9" fill="#111" stroke="#d9402e" stroke-width="0.8"/><path d="M6.8 355.5a3.9 3.9 0 000 7.8z" fill="#2f8fe8"/>
<path d="M3.6 370.6h4.2l1.4 1.4v7h-5.6z" fill="#eeeeee"/><rect x="9.8" y="375" width="2.4" height="4" fill="none" stroke="#e0e0e0" stroke-width="0.7"/>
<circle cx="6.8" cy="388" r="3.6" fill="none" stroke="#9a9a9a" stroke-width="0.8"/><text x="6.8" y="390.2" font-size="5.6" text-anchor="middle" fill="#9a9a9a" font-family="Liberation Sans,sans-serif">?</text>
<path d="M22.6 333l3.6 2.3-3.6 2.3z" fill="#e8e8e8"/>
<rect x="17.4" y="347.5" width="4" height="12.5" fill="none" stroke="#777" stroke-width="0.5"/>
<rect x="22.6" y="347.5" width="8" height="12.5" fill="none" stroke="#777" stroke-width="0.5"/>
<line x1="17.4" x2="21.4" y1="353.8" y2="353.8" stroke="#777" stroke-width="0.5"/>
<rect x="17.4" y="369.0" width="4" height="9.5" fill="none" stroke="#777" stroke-width="0.5"/>
<rect x="22.6" y="369.0" width="8" height="9.5" fill="none" stroke="#777" stroke-width="0.5"/>
<line x1="17.4" x2="21.4" y1="373.8" y2="373.8" stroke="#777" stroke-width="0.5"/>
<rect x="17.4" y="386.0" width="4" height="14.0" fill="none" stroke="#6f9fe0" stroke-width="0.5"/>
<rect x="22.6" y="386.0" width="8" height="14.0" fill="none" stroke="#6f9fe0" stroke-width="0.5"/>
<line x1="17.4" x2="21.4" y1="393.0" y2="393.0" stroke="#6f9fe0" stroke-width="0.5"/>
<path d="M731.8 54.6v8.4M727.6 58.8h8.4" stroke="#e6e6e6" stroke-width="0.9"/>
<path d="M742 62.4a7 7 0 007-7" fill="none" stroke="#27b3ad" stroke-width="1.1"/><rect x="741.4" y="54.8" width="8.4" height="8" fill="none" stroke="#27b3ad" stroke-width="0.7" stroke-dasharray="1.2 0.8"/>
<path d="M756 55.4h7M759.4 55.4v3M757 58.6h5v4h-5z" fill="none" stroke="#cfcfcf" stroke-width="0.9"/>
<circle cx="774.7" cy="58.8" r="3.2" fill="#cfcfcf"/><circle cx="775.4" cy="58.4" r="1.4" fill="#8a8a8a"/>
<rect x="782.8" y="55.4" width="8.2" height="5" fill="#e0e0e0"/><path d="M786.9 60.4v2.4M784.4 63h5" stroke="#e0e0e0" stroke-width="0.9"/>
<path d="M796.6 55l6.4 7.4" stroke="#bdbdbd" stroke-width="1.4"/><circle cx="797" cy="55.6" r="1.6" fill="none" stroke="#bdbdbd" stroke-width="0.8"/>
<path d="M733 139v7" stroke="#2e2e2e" stroke-width="1.4"/><path d="M731 140h4" stroke="#2e2e2e" stroke-width="1"/>
<path d="M745.6 139.4v7M750 139.4v7M745.6 141h4.4M745.6 144.4h4.4" stroke="#a9c6ec" stroke-width="0.7"/>
<circle cx="762" cy="142.8" r="2.6" fill="none" stroke="#343434" stroke-width="1"/><path d="M771.6 140.6h4.4v5h-4.4z" fill="none" stroke="#343434" stroke-width="1"/>
<rect x="784.4" y="138.8" width="7" height="8.2" fill="#e8e8e8"/><rect x="785.6" y="141" width="4.6" height="4.4" fill="#e8b93a"/>
<path d="M25.4 423l1.6-5 1.4 3.4 1.4-3.4" stroke="#27b3ad" stroke-width="0.7" fill="none"/>
<path d="M23 407.4l-1.6 1.8 1.6 1.8M81.6 407.4l1.6 1.8-1.6 1.8" stroke="#bdbdbd" stroke-width="0.7" fill="none"/>
<line x1="43.9" x2="43.9" y1="415.2" y2="426.2" stroke="#1b1b1b" stroke-width="0.9"/>
<line x1="47.5" x2="47.5" y1="415.2" y2="421.0" stroke="#3b3b3b" stroke-width="2.6"/>
<line x1="51.5" x2="51.5" y1="415.2" y2="421" stroke="#1d1d1d" stroke-width="0.8"/>
<line x1="55.1" x2="55.1" y1="415.2" y2="421.0" stroke="#3b3b3b" stroke-width="2.6"/>
<line x1="59.1" x2="59.1" y1="415.2" y2="421" stroke="#1d1d1d" stroke-width="0.8"/>
<line x1="62.7" x2="62.7" y1="415.2" y2="421.0" stroke="#3b3b3b" stroke-width="2.6"/>
<line x1="66.7" x2="66.7" y1="415.2" y2="421" stroke="#1d1d1d" stroke-width="0.8"/>
<line x1="70.3" x2="70.3" y1="415.2" y2="421.0" stroke="#3b3b3b" stroke-width="2.6"/>
<line x1="74.2" x2="74.2" y1="415.2" y2="421" stroke="#1d1d1d" stroke-width="0.8"/>
<line x1="77.8" x2="77.8" y1="415.2" y2="421.0" stroke="#3b3b3b" stroke-width="2.6"/>
<line x1="81.8" x2="81.8" y1="415.2" y2="426.2" stroke="#1b1b1b" stroke-width="0.9"/>
<line x1="85.4" x2="85.4" y1="415.2" y2="421.0" stroke="#3b3b3b" stroke-width="2.6"/>
<line x1="89.4" x2="89.4" y1="415.2" y2="421" stroke="#1d1d1d" stroke-width="0.8"/>
<line x1="93.0" x2="93.0" y1="415.2" y2="421.0" stroke="#3b3b3b" stroke-width="2.6"/>
<line x1="97.0" x2="97.0" y1="415.2" y2="421" stroke="#1d1d1d" stroke-width="0.8"/>
<line x1="100.6" x2="100.6" y1="415.2" y2="421.0" stroke="#3b3b3b" stroke-width="2.6"/>
<line x1="104.6" x2="104.6" y1="415.2" y2="421" stroke="#1d1d1d" stroke-width="0.8"/>
<line x1="108.2" x2="108.2" y1="415.2" y2="421.0" stroke="#3b3b3b" stroke-width="2.6"/>
<line x1="112.2" x2="112.2" y1="415.2" y2="421" stroke="#1d1d1d" stroke-width="0.8"/>
<line x1="115.8" x2="115.8" y1="415.2" y2="421.0" stroke="#3b3b3b" stroke-width="2.6"/>
<line x1="119.8" x2="119.8" y1="415.2" y2="426.2" stroke="#1b1b1b" stroke-width="0.9"/>
<line x1="123.4" x2="123.4" y1="415.2" y2="421.0" stroke="#3b3b3b" stroke-width="2.6"/>
<line x1="127.3" x2="127.3" y1="415.2" y2="421" stroke="#1d1d1d" stroke-width="0.8"/>
<line x1="130.9" x2="130.9" y1="415.2" y2="421.0" stroke="#3b3b3b" stroke-width="2.6"/>
<line x1="134.9" x2="134.9" y1="415.2" y2="421" stroke="#1d1d1d" stroke-width="0.8"/>
<line x1="138.5" x2="138.5" y1="415.2" y2="421.0" stroke="#3b3b3b" stroke-width="2.6"/>
<line x1="142.5" x2="142.5" y1="415.2" y2="421" stroke="#1d1d1d" stroke-width="0.8"/>
<line x1="146.1" x2="146.1" y1="415.2" y2="421.0" stroke="#3b3b3b" stroke-width="2.6"/>
<line x1="150.1" x2="150.1" y1="415.2" y2="421" stroke="#1d1d1d" stroke-width="0.8"/>
<line x1="153.7" x2="153.7" y1="415.2" y2="421.0" stroke="#3b3b3b" stroke-width="2.6"/>
<line x1="157.7" x2="157.7" y1="415.2" y2="426.2" stroke="#1b1b1b" stroke-width="0.9"/>
<line x1="161.3" x2="161.3" y1="415.2" y2="421.0" stroke="#3b3b3b" stroke-width="2.6"/>
<line x1="165.3" x2="165.3" y1="415.2" y2="421" stroke="#1d1d1d" stroke-width="0.8"/>
<line x1="168.9" x2="168.9" y1="415.2" y2="421.0" stroke="#3b3b3b" stroke-width="2.6"/>
<line x1="172.9" x2="172.9" y1="415.2" y2="421" stroke="#1d1d1d" stroke-width="0.8"/>
<line x1="176.5" x2="176.5" y1="415.2" y2="421.0" stroke="#3b3b3b" stroke-width="2.6"/>
<line x1="180.4" x2="180.4" y1="415.2" y2="421" stroke="#1d1d1d" stroke-width="0.8"/>
<line x1="184.0" x2="184.0" y1="415.2" y2="421.0" stroke="#3b3b3b" stroke-width="2.6"/>
<line x1="188.0" x2="188.0" y1="415.2" y2="421" stroke="#1d1d1d" stroke-width="0.8"/>
<line x1="191.6" x2="191.6" y1="415.2" y2="421.0" stroke="#3b3b3b" stroke-width="2.6"/>
<line x1="195.6" x2="195.6" y1="415.2" y2="426.2" stroke="#1b1b1b" stroke-width="0.9"/>
<line x1="199.2" x2="199.2" y1="415.2" y2="421.0" stroke="#3b3b3b" stroke-width="2.6"/>
<line x1="203.2" x2="203.2" y1="415.2" y2="421" stroke="#1d1d1d" stroke-width="0.8"/>
<line x1="206.8" x2="206.8" y1="415.2" y2="421.0" stroke="#3b3b3b" stroke-width="2.6"/>
<line x1="210.8" x2="210.8" y1="415.2" y2="421" stroke="#1d1d1d" stroke-width="0.8"/>
<line x1="214.4" x2="214.4" y1="415.2" y2="421.0" stroke="#3b3b3b" stroke-width="2.6"/>
<line x1="218.4" x2="218.4" y1="415.2" y2="421" stroke="#1d1d1d" stroke-width="0.8"/>
<line x1="222.0" x2="222.0" y1="415.2" y2="421.0" stroke="#3b3b3b" stroke-width="2.6"/>
<line x1="226.0" x2="226.0" y1="415.2" y2="421" stroke="#1d1d1d" stroke-width="0.8"/>
<line x1="229.6" x2="229.6" y1="415.2" y2="421.0" stroke="#3b3b3b" stroke-width="2.6"/>
<line x1="233.6" x2="233.6" y1="415.2" y2="426.2" stroke="#1b1b1b" stroke-width="0.9"/>
<line x1="237.2" x2="237.2" y1="415.2" y2="421.0" stroke="#3b3b3b" stroke-width="2.6"/>
<line x1="241.1" x2="241.1" y1="415.2" y2="421" stroke="#1d1d1d" stroke-width="0.8"/>
<line x1="244.7" x2="244.7" y1="415.2" y2="421.0" stroke="#3b3b3b" stroke-width="2.6"/>
<line x1="248.7" x2="248.7" y1="415.2" y2="421" stroke="#1d1d1d" stroke-width="0.8"/>
<line x1="252.3" x2="252.3" y1="415.2" y2="421.0" stroke="#3b3b3b" stroke-width="2.6"/>
<line x1="256.3" x2="256.3" y1="415.2" y2="421" stroke="#1d1d1d" stroke-width="0.8"/>
<line x1="259.9" x2="259.9" y1="415.2" y2="421.0" stroke="#3b3b3b" stroke-width="2.6"/>
<line x1="263.9" x2="263.9" y1="415.2" y2="421" stroke="#1d1d1d" stroke-width="0.8"/>
<line x1="267.5" x2="267.5" y1="415.2" y2="421.0" stroke="#3b3b3b" stroke-width="2.6"/>
<line x1="271.5" x2="271.5" y1="415.2" y2="426.2" stroke="#1b1b1b" stroke-width="0.9"/>
<line x1="275.1" x2="275.1" y1="415.2" y2="421.0" stroke="#3b3b3b" stroke-width="2.6"/>
<line x1="279.1" x2="279.1" y1="415.2" y2="421" stroke="#1d1d1d" stroke-width="0.8"/>
<line x1="282.7" x2="282.7" y1="415.2" y2="421.0" stroke="#3b3b3b" stroke-width="2.6"/>
<line x1="286.7" x2="286.7" y1="415.2" y2="421" stroke="#1d1d1d" stroke-width="0.8"/>
<line x1="290.3" x2="290.3" y1="415.2" y2="421.0" stroke="#3b3b3b" stroke-width="2.6"/>
<line x1="294.2" x2="294.2" y1="415.2" y2="421" stroke="#1d1d1d" stroke-width="0.8"/>
<line x1="297.8" x2="297.8" y1="415.2" y2="421.0" stroke="#3b3b3b" stroke-width="2.6"/>
<line x1="301.8" x2="301.8" y1="415.2" y2="421" stroke="#1d1d1d" stroke-width="0.8"/>
<line x1="305.4" x2="305.4" y1="415.2" y2="421.0" stroke="#3b3b3b" stroke-width="2.6"/>
<line x1="309.4" x2="309.4" y1="415.2" y2="426.2" stroke="#1b1b1b" stroke-width="0.9"/>
<line x1="313.0" x2="313.0" y1="415.2" y2="421.0" stroke="#3b3b3b" stroke-width="2.6"/>
<line x1="317.0" x2="317.0" y1="415.2" y2="421" stroke="#1d1d1d" stroke-width="0.8"/>
<line x1="320.6" x2="320.6" y1="415.2" y2="421.0" stroke="#3b3b3b" stroke-width="2.6"/>
<line x1="324.6" x2="324.6" y1="415.2" y2="421" stroke="#1d1d1d" stroke-width="0.8"/>
<line x1="328.2" x2="328.2" y1="415.2" y2="421.0" stroke="#3b3b3b" stroke-width="2.6"/>
<line x1="332.2" x2="332.2" y1="415.2" y2="421" stroke="#1d1d1d" stroke-width="0.8"/>
<line x1="335.8" x2="335.8" y1="415.2" y2="421.0" stroke="#3b3b3b" stroke-width="2.6"/>
<line x1="339.8" x2="339.8" y1="415.2" y2="421" stroke="#1d1d1d" stroke-width="0.8"/>
<line x1="343.4" x2="343.4" y1="415.2" y2="421.0" stroke="#3b3b3b" stroke-width="2.6"/>
<line x1="347.3" x2="347.3" y1="415.2" y2="426.2" stroke="#1b1b1b" stroke-width="0.9"/>
<line x1="350.9" x2="350.9" y1="415.2" y2="421.0" stroke="#3b3b3b" stroke-width="2.6"/>
<line x1="354.9" x2="354.9" y1="415.2" y2="421" stroke="#1d1d1d" stroke-width="0.8"/>
<line x1="358.5" x2="358.5" y1="415.2" y2="421.0" stroke="#3b3b3b" stroke-width="2.6"/>
<line x1="362.5" x2="362.5" y1="415.2" y2="421" stroke="#1d1d1d" stroke-width="0.8"/>
<line x1="366.1" x2="366.1" y1="415.2" y2="421.0" stroke="#3b3b3b" stroke-width="2.6"/>
<line x1="370.1" x2="370.1" y1="415.2" y2="421" stroke="#1d1d1d" stroke-width="0.8"/>
<line x1="373.7" x2="373.7" y1="415.2" y2="421.0" stroke="#3b3b3b" stroke-width="2.6"/>
<line x1="377.7" x2="377.7" y1="415.2" y2="421" stroke="#1d1d1d" stroke-width="0.8"/>
<line x1="381.3" x2="381.3" y1="415.2" y2="421.0" stroke="#3b3b3b" stroke-width="2.6"/>
<line x1="385.3" x2="385.3" y1="415.2" y2="426.2" stroke="#1b1b1b" stroke-width="0.9"/>
<line x1="388.9" x2="388.9" y1="415.2" y2="421.0" stroke="#3b3b3b" stroke-width="2.6"/>
<line x1="392.9" x2="392.9" y1="415.2" y2="421" stroke="#1d1d1d" stroke-width="0.8"/>
<line x1="396.5" x2="396.5" y1="415.2" y2="421.0" stroke="#3b3b3b" stroke-width="2.6"/>
<line x1="400.4" x2="400.4" y1="415.2" y2="421" stroke="#1d1d1d" stroke-width="0.8"/>
<line x1="404.0" x2="404.0" y1="415.2" y2="421.0" stroke="#3b3b3b" stroke-width="2.6"/>
<line x1="408.0" x2="408.0" y1="415.2" y2="421" stroke="#1d1d1d" stroke-width="0.8"/>
<line x1="411.6" x2="411.6" y1="415.2" y2="421.0" stroke="#3b3b3b" stroke-width="2.6"/>
<line x1="415.6" x2="415.6" y1="415.2" y2="421" stroke="#1d1d1d" stroke-width="0.8"/>
<line x1="419.2" x2="419.2" y1="415.2" y2="421.0" stroke="#3b3b3b" stroke-width="2.6"/>
<line x1="423.2" x2="423.2" y1="415.2" y2="426.2" stroke="#1b1b1b" stroke-width="0.9"/>
<line x1="426.8" x2="426.8" y1="415.2" y2="421.0" stroke="#3b3b3b" stroke-width="2.6"/>
<line x1="430.8" x2="430.8" y1="415.2" y2="421" stroke="#1d1d1d" stroke-width="0.8"/>
<line x1="434.4" x2="434.4" y1="415.2" y2="421.0" stroke="#3b3b3b" stroke-width="2.6"/>
<line x1="438.4" x2="438.4" y1="415.2" y2="421" stroke="#1d1d1d" stroke-width="0.8"/>
<line x1="442.0" x2="442.0" y1="415.2" y2="421.0" stroke="#3b3b3b" stroke-width="2.6"/>
<line x1="446.0" x2="446.0" y1="415.2" y2="421" stroke="#1d1d1d" stroke-width="0.8"/>
<line x1="449.6" x2="449.6" y1="415.2" y2="421.0" stroke="#3b3b3b" stroke-width="2.6"/>
<line x1="453.5" x2="453.5" y1="415.2" y2="421" stroke="#1d1d1d" stroke-width="0.8"/>
<line x1="457.1" x2="457.1" y1="415.2" y2="421.0" stroke="#3b3b3b" stroke-width="2.6"/>
<line x1="461.1" x2="461.1" y1="415.2" y2="426.2" stroke="#1b1b1b" stroke-width="0.9"/>
<line x1="464.7" x2="464.7" y1="415.2" y2="421.0" stroke="#3b3b3b" stroke-width="2.6"/>
<line x1="468.7" x2="468.7" y1="415.2" y2="421" stroke="#1d1d1d" stroke-width="0.8"/>
<line x1="472.3" x2="472.3" y1="415.2" y2="421.0" stroke="#3b3b3b" stroke-width="2.6"/>
<line x1="476.3" x2="476.3" y1="415.2" y2="421" stroke="#1d1d1d" stroke-width="0.8"/>
<line x1="479.9" x2="479.9" y1="415.2" y2="421.0" stroke="#3b3b3b" stroke-width="2.6"/>
<line x1="483.9" x2="483.9" y1="415.2" y2="421" stroke="#1d1d1d" stroke-width="0.8"/>
<line x1="487.5" x2="487.5" y1="415.2" y2="421.0" stroke="#3b3b3b" stroke-width="2.6"/>
<line x1="491.5" x2="491.5" y1="415.2" y2="421" stroke="#1d1d1d" stroke-width="0.8"/>
<line x1="495.1" x2="495.1" y1="415.2" y2="421.0" stroke="#3b3b3b" stroke-width="2.6"/>
<line x1="499.1" x2="499.1" y1="415.2" y2="426.2" stroke="#1b1b1b" stroke-width="0.9"/>
<line x1="502.7" x2="502.7" y1="415.2" y2="421.0" stroke="#3b3b3b" stroke-width="2.6"/>
<line x1="506.6" x2="506.6" y1="415.2" y2="421" stroke="#1d1d1d" stroke-width="0.8"/>
<line x1="510.2" x2="510.2" y1="415.2" y2="421.0" stroke="#3b3b3b" stroke-width="2.6"/>
<line x1="514.2" x2="514.2" y1="415.2" y2="421" stroke="#1d1d1d" stroke-width="0.8"/>
<line x1="517.8" x2="517.8" y1="415.2" y2="421.0" stroke="#3b3b3b" stroke-width="2.6"/>
<line x1="521.8" x2="521.8" y1="415.2" y2="421" stroke="#1d1d1d" stroke-width="0.8"/>
<line x1="525.4" x2="525.4" y1="415.2" y2="421.0" stroke="#3b3b3b" stroke-width="2.6"/>
<line x1="529.4" x2="529.4" y1="415.2" y2="421" stroke="#1d1d1d" stroke-width="0.8"/>
<line x1="533.0" x2="533.0" y1="415.2" y2="421.0" stroke="#3b3b3b" stroke-width="2.6"/>
<line x1="537.0" x2="537.0" y1="415.2" y2="426.2" stroke="#1b1b1b" stroke-width="0.9"/>
<line x1="540.6" x2="540.6" y1="415.2" y2="421.0" stroke="#3b3b3b" stroke-width="2.6"/>
<line x1="544.6" x2="544.6" y1="415.2" y2="421" stroke="#1d1d1d" stroke-width="0.8"/>
<line x1="548.2" x2="548.2" y1="415.2" y2="421.0" stroke="#3b3b3b" stroke-width="2.6"/>
<line x1="552.2" x2="552.2" y1="415.2" y2="421" stroke="#1d1d1d" stroke-width="0.8"/>
<line x1="555.8" x2="555.8" y1="415.2" y2="421.0" stroke="#3b3b3b" stroke-width="2.6"/>
<line x1="559.7" x2="559.7" y1="415.2" y2="421" stroke="#1d1d1d" stroke-width="0.8"/>
<line x1="563.3" x2="563.3" y1="415.2" y2="421.0" stroke="#3b3b3b" stroke-width="2.6"/>
<line x1="567.3" x2="567.3" y1="415.2" y2="421" stroke="#1d1d1d" stroke-width="0.8"/>
<line x1="570.9" x2="570.9" y1="415.2" y2="421.0" stroke="#3b3b3b" stroke-width="2.6"/>
<line x1="574.9" x2="574.9" y1="415.2" y2="426.2" stroke="#1b1b1b" stroke-width="0.9"/>
<line x1="578.5" x2="578.5" y1="415.2" y2="421.0" stroke="#3b3b3b" stroke-width="2.6"/>
<line x1="582.5" x2="582.5" y1="415.2" y2="421" stroke="#1d1d1d" stroke-width="0.8"/>
<line x1="586.1" x2="586.1" y1="415.2" y2="421.0" stroke="#3b3b3b" stroke-width="2.6"/>
<line x1="590.1" x2="590.1" y1="415.2" y2="421" stroke="#1d1d1d" stroke-width="0.8"/>
<line x1="593.7" x2="593.7" y1="415.2" y2="421.0" stroke="#3b3b3b" stroke-width="2.6"/>
<line x1="597.7" x2="597.7" y1="415.2" y2="421" stroke="#1d1d1d" stroke-width="0.8"/>
<line x1="601.3" x2="601.3" y1="415.2" y2="421.0" stroke="#3b3b3b" stroke-width="2.6"/>
<line x1="605.3" x2="605.3" y1="415.2" y2="421" stroke="#1d1d1d" stroke-width="0.8"/>
<line x1="608.9" x2="608.9" y1="415.2" y2="421.0" stroke="#3b3b3b" stroke-width="2.6"/>
<line x1="612.9" x2="612.9" y1="415.2" y2="426.2" stroke="#1b1b1b" stroke-width="0.9"/>
<line x1="616.5" x2="616.5" y1="415.2" y2="421.0" stroke="#3b3b3b" stroke-width="2.6"/>
<line x1="620.4" x2="620.4" y1="415.2" y2="421" stroke="#1d1d1d" stroke-width="0.8"/>
<line x1="624.0" x2="624.0" y1="415.2" y2="421.0" stroke="#3b3b3b" stroke-width="2.6"/>
<line x1="628.0" x2="628.0" y1="415.2" y2="421" stroke="#1d1d1d" stroke-width="0.8"/>
<line x1="631.6" x2="631.6" y1="415.2" y2="421.0" stroke="#3b3b3b" stroke-width="2.6"/>
<line x1="635.6" x2="635.6" y1="415.2" y2="421" stroke="#1d1d1d" stroke-width="0.8"/>
<line x1="639.2" x2="639.2" y1="415.2" y2="421.0" stroke="#3b3b3b" stroke-width="2.6"/>
<line x1="643.2" x2="643.2" y1="415.2" y2="421" stroke="#1d1d1d" stroke-width="0.8"/>
<line x1="646.8" x2="646.8" y1="415.2" y2="421.0" stroke="#3b3b3b" stroke-width="2.6"/>
<line x1="650.8" x2="650.8" y1="415.2" y2="426.2" stroke="#1b1b1b" stroke-width="0.9"/>
<line x1="654.4" x2="654.4" y1="415.2" y2="421.0" stroke="#3b3b3b" stroke-width="2.6"/>
<line x1="658.4" x2="658.4" y1="415.2" y2="421" stroke="#1d1d1d" stroke-width="0.8"/>
<line x1="662.0" x2="662.0" y1="415.2" y2="421.0" stroke="#3b3b3b" stroke-width="2.6"/>
<line x1="666.0" x2="666.0" y1="415.2" y2="421" stroke="#1d1d1d" stroke-width="0.8"/>
<line x1="669.6" x2="669.6" y1="415.2" y2="421.0" stroke="#3b3b3b" stroke-width="2.6"/>
<line x1="673.5" x2="673.5" y1="415.2" y2="421" stroke="#1d1d1d" stroke-width="0.8"/>
<line x1="677.1" x2="677.1" y1="415.2" y2="421.0" stroke="#3b3b3b" stroke-width="2.6"/>
<line x1="681.1" x2="681.1" y1="415.2" y2="421" stroke="#1d1d1d" stroke-width="0.8"/>
<line x1="684.7" x2="684.7" y1="415.2" y2="421.0" stroke="#3b3b3b" stroke-width="2.6"/>
<line x1="688.7" x2="688.7" y1="415.2" y2="426.2" stroke="#1b1b1b" stroke-width="0.9"/>
<line x1="692.3" x2="692.3" y1="415.2" y2="421.0" stroke="#3b3b3b" stroke-width="2.6"/>
<line x1="696.3" x2="696.3" y1="415.2" y2="421" stroke="#1d1d1d" stroke-width="0.8"/>
<line x1="699.9" x2="699.9" y1="415.2" y2="421.0" stroke="#3b3b3b" stroke-width="2.6"/>
<line x1="703.9" x2="703.9" y1="415.2" y2="421" stroke="#1d1d1d" stroke-width="0.8"/>
<line x1="707.5" x2="707.5" y1="415.2" y2="421.0" stroke="#3b3b3b" stroke-width="2.6"/>
<line x1="711.5" x2="711.5" y1="415.2" y2="421" stroke="#1d1d1d" stroke-width="0.8"/>
<line x1="715.1" x2="715.1" y1="415.2" y2="421.0" stroke="#3b3b3b" stroke-width="2.6"/>
<line x1="719.1" x2="719.1" y1="415.2" y2="421" stroke="#1d1d1d" stroke-width="0.8"/>
<line x1="722.7" x2="722.7" y1="415.2" y2="421.0" stroke="#3b3b3b" stroke-width="2.6"/>
<line x1="726.6" x2="726.6" y1="415.2" y2="426.2" stroke="#1b1b1b" stroke-width="0.9"/>
<line x1="730.2" x2="730.2" y1="415.2" y2="421.0" stroke="#3b3b3b" stroke-width="2.6"/>
<line x1="734.2" x2="734.2" y1="415.2" y2="421" stroke="#1d1d1d" stroke-width="0.8"/>
<line x1="737.8" x2="737.8" y1="415.2" y2="421.0" stroke="#3b3b3b" stroke-width="2.6"/>
<line x1="741.8" x2="741.8" y1="415.2" y2="421" stroke="#1d1d1d" stroke-width="0.8"/>
<line x1="745.4" x2="745.4" y1="415.2" y2="421.0" stroke="#3b3b3b" stroke-width="2.6"/>
<line x1="749.4" x2="749.4" y1="415.2" y2="421" stroke="#1d1d1d" stroke-width="0.8"/>
<line x1="753.0" x2="753.0" y1="415.2" y2="421.0" stroke="#3b3b3b" stroke-width="2.6"/>
<line x1="757.0" x2="757.0" y1="415.2" y2="421" stroke="#1d1d1d" stroke-width="0.8"/>
<line x1="760.6" x2="760.6" y1="415.2" y2="421.0" stroke="#3b3b3b" stroke-width="2.6"/>
<line x1="764.6" x2="764.6" y1="415.2" y2="426.2" stroke="#1b1b1b" stroke-width="0.9"/>
<line x1="768.2" x2="768.2" y1="415.2" y2="421.0" stroke="#3b3b3b" stroke-width="2.6"/>
<line x1="772.2" x2="772.2" y1="415.2" y2="421" stroke="#1d1d1d" stroke-width="0.8"/>
<line x1="775.8" x2="775.8" y1="415.2" y2="421.0" stroke="#3b3b3b" stroke-width="2.6"/>
<line x1="779.7" x2="779.7" y1="415.2" y2="421" stroke="#1d1d1d" stroke-width="0.8"/>
<line x1="783.3" x2="783.3" y1="415.2" y2="421.0" stroke="#3b3b3b" stroke-width="2.6"/>
<line x1="787.3" x2="787.3" y1="415.2" y2="421" stroke="#1d1d1d" stroke-width="0.8"/>
<line x1="790.9" x2="790.9" y1="415.2" y2="421.0" stroke="#3b3b3b" stroke-width="2.6"/>
<line x1="794.9" x2="794.9" y1="415.2" y2="421" stroke="#1d1d1d" stroke-width="0.8"/>
<line x1="798.5" x2="798.5" y1="415.2" y2="421.0" stroke="#3b3b3b" stroke-width="2.6"/>
<line x1="802.5" x2="802.5" y1="415.2" y2="426.2" stroke="#1b1b1b" stroke-width="0.9"/>
<line x1="806.1" x2="806.1" y1="415.2" y2="421.0" stroke="#3b3b3b" stroke-width="2.6"/>
<text x="81.6" y="425.6" font-size="4.4" fill="#bdbdbd" font-family="Liberation Sans,sans-serif">5</text>
<text x="119.6" y="425.6" font-size="4.4" fill="#bdbdbd" font-family="Liberation Sans,sans-serif">10</text>
<text x="157.5" y="425.6" font-size="4.4" fill="#bdbdbd" font-family="Liberation Sans,sans-serif">15</text>
<text x="195.4" y="425.6" font-size="4.4" fill="#bdbdbd" font-family="Liberation Sans,sans-serif">20</text>
<text x="233.4" y="425.6" font-size="4.4" fill="#bdbdbd" font-family="Liberation Sans,sans-serif">25</text>
<text x="271.3" y="425.6" font-size="4.4" fill="#bdbdbd" font-family="Liberation Sans,sans-serif">30</text>
<text x="309.2" y="425.6" font-size="4.4" fill="#bdbdbd" font-family="Liberation Sans,sans-serif">35</text>
<text x="347.1" y="425.6" font-size="4.4" fill="#bdbdbd" font-family="Liberation Sans,sans-serif">40</text>
<text x="385.1" y="425.6" font-size="4.4" fill="#bdbdbd" font-family="Liberation Sans,sans-serif">45</text>
<text x="423.0" y="425.6" font-size="4.4" fill="#bdbdbd" font-family="Liberation Sans,sans-serif">50</text>
<text x="460.9" y="425.6" font-size="4.4" fill="#bdbdbd" font-family="Liberation Sans,sans-serif">55</text>
<text x="498.9" y="425.6" font-size="4.4" fill="#bdbdbd" font-family="Liberation Sans,sans-serif">60</text>
<text x="536.8" y="425.6" font-size="4.4" fill="#bdbdbd" font-family="Liberation Sans,sans-serif">65</text>
<text x="574.7" y="425.6" font-size="4.4" fill="#bdbdbd" font-family="Liberation Sans,sans-serif">70</text>
<text x="612.6" y="425.6" font-size="4.4" fill="#bdbdbd" font-family="Liberation Sans,sans-serif">75</text>
<text x="650.6" y="425.6" font-size="4.4" fill="#bdbdbd" font-family="Liberation Sans,sans-serif">80</text>
<text x="688.5" y="425.6" font-size="4.4" fill="#bdbdbd" font-family="Liberation Sans,sans-serif">85</text>
<text x="726.4" y="425.6" font-size="4.4" fill="#bdbdbd" font-family="Liberation Sans,sans-serif">90</text>
<text x="764.4" y="425.6" font-size="4.4" fill="#bdbdbd" font-family="Liberation Sans,sans-serif">95</text>
<text x="802.3" y="425.6" font-size="4.4" fill="#bdbdbd" font-family="Liberation Sans,sans-serif">100</text>
<rect x="466.6" y="430.6" width="5.6" height="5.6" fill="none" stroke="#e6e6e6" stroke-width="0.8"/><path d="M466.6 430.6l5.6 5.6M472.2 430.6l-5.6 5.6" stroke="#e6e6e6" stroke-width="0.6"/>
<rect x="444.6" y="430.6" width="5" height="5.6" fill="#3a3a3a"/><rect x="455" y="430.6" width="4.4" height="5.6" fill="#3c3c3c"/>
<circle cx="578.4" cy="443.8" r="2.2" fill="none" stroke="#dcdcdc" stroke-width="0.7"/><path d="M578.4 442.4v1.6h1.2" stroke="#dcdcdc" stroke-width="0.5" fill="none"/>
<g fill="#efefef"><rect x="634.6" y="430.6" width="0.9" height="5"/><path d="M638.6 430.6v5l-2.8-2.5zM641.6 430.6v5l-2.8-2.5z"/>
<path d="M650 430.6v5l-3-2.5z"/><rect x="650.8" y="430.6" width="0.8" height="5"/><rect x="652.4" y="430.6" width="0.8" height="5"/>
<path d="M656.6 429.8v6.6l4.6-3.3z"/>
<rect x="665.4" y="430.6" width="0.8" height="5"/><rect x="667" y="430.6" width="0.8" height="5"/><path d="M668.6 430.6v5l3-2.5z"/>
<path d="M676.6 430.6v5l2.8-2.5zM679.6 430.6v5l2.8-2.5z"/><rect x="682.6" y="430.6" width="0.9" height="5"/>
<path d="M638.4 441v4.4l-2.4-2.2zM641 441v4.4l-2.4-2.2z"/></g>
<rect x="678.4" y="440.4" width="4.4" height="5.6" fill="#d8c27a"/><rect x="680.4" y="442.6" width="3" height="3.6" fill="#8a8a8a"/>
<path d="M677 441.4l-1 1 1 1M677 444.4l-1 1" stroke="#bbb" stroke-width="0.5" fill="none"/>
<path d="M700 431.6v12M694 437.6h12" stroke="#f4f4f4" stroke-width="2.2"/><path d="M700 439.6v4" stroke="#58b89a" stroke-width="2.2"/>
<path d="M734.6 446v-5.6h2.4M738.6 440.4v5.6" stroke="#27b3ad" stroke-width="0.9" fill="none"/><path d="M740.4 445.2l.9.9.9-.9" fill="#ccc"/>
<circle cx="790.4" cy="432.4" r="2.2" fill="none" stroke="#f0f0f0" stroke-width="0.9"/><path d="M792 434l2 2.2" stroke="#f0f0f0" stroke-width="1.1"/>
<circle cx="803" cy="431.8" r="1.9" fill="none" stroke="#27b3ad" stroke-width="0.9"/><path d="M801.6 433.4l-2.4 2.8" stroke="#27b3ad" stroke-width="1.1"/><rect x="803.4" y="434" width="2.4" height="2.4" fill="#ddd"/>
<path d="M809 436l3.6-5.6 3.6 5.6z" fill="#27b3ad"/><rect x="811.4" y="430" width="2.6" height="2.2" fill="#ddd"/>
<path d="M819 436l3.2-5 3.4 3.6z" fill="#27b3ad"/><rect x="823" y="430" width="2.4" height="2.4" fill="#ddd"/>
<path d="M788.6 445.6l2-5.2 2 2.4" stroke="#27b3ad" stroke-width="0.9" fill="none"/>
<path d="M799.6 446.4v-3.4l1.2-1.6v-1.6h1.2v1.6l1.8.6v4.4z" fill="#f0f0f0"/>
<path d="M810 446l4-5.4" stroke="#d0d0d0" stroke-width="1.2"/><circle cx="814.6" cy="440.6" r="1.4" fill="#27b3ad"/>
<rect x="819.4" y="439.6" width="6.4" height="6.4" fill="none" stroke="#f0f0f0" stroke-width="0.9"/><rect x="822" y="442.4" width="3.8" height="3.6" fill="#f0f0f0"/>
</svg>
</div></body></html>
